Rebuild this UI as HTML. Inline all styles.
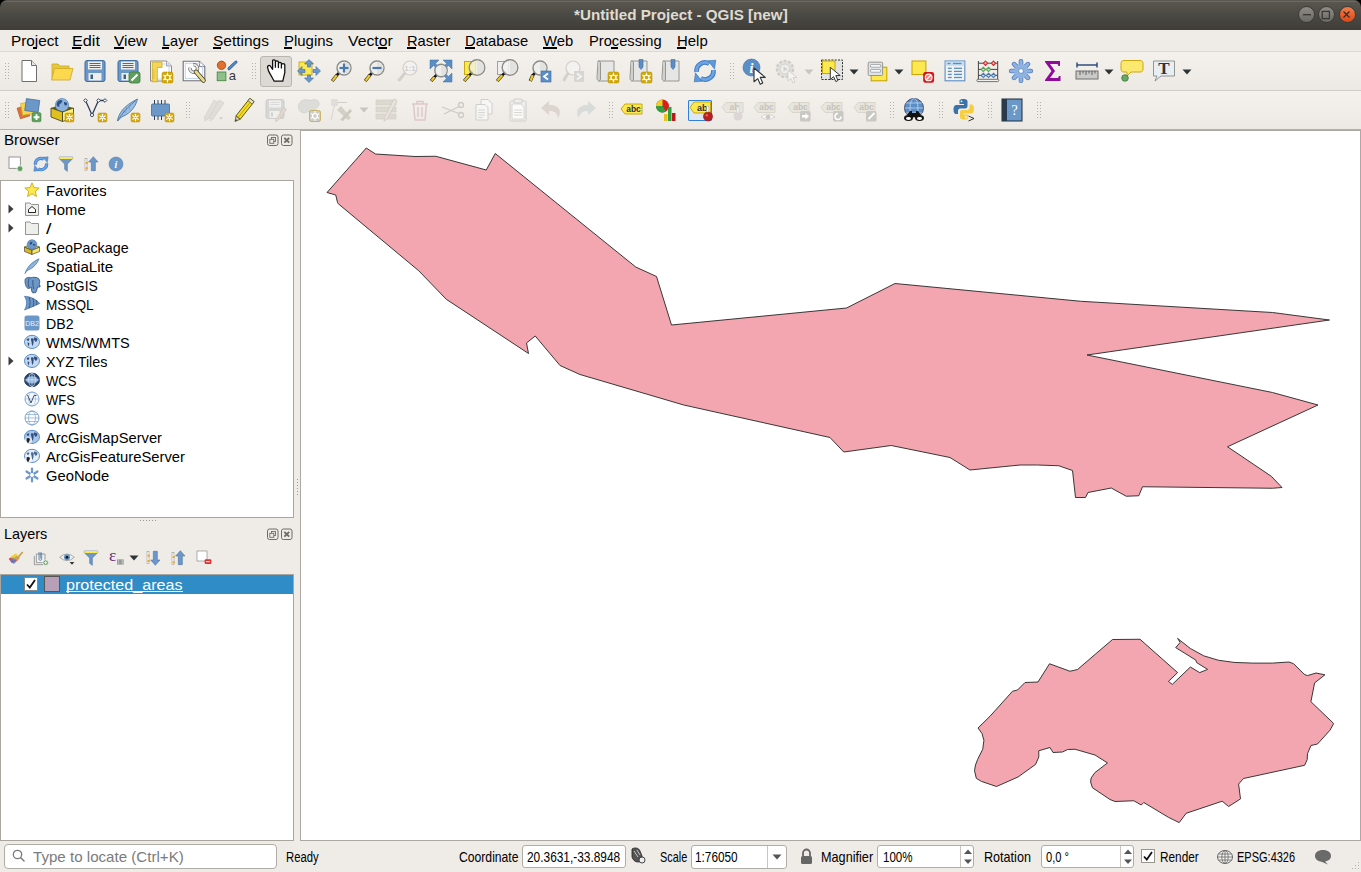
<!DOCTYPE html>
<html><head><meta charset="utf-8"><title>QGIS</title>
<style>
*{margin:0;padding:0;box-sizing:border-box}
html,body{width:1361px;height:872px;overflow:hidden;background:#efebe7;font-family:"Liberation Sans",sans-serif;position:relative}
.a{position:absolute}
.t{white-space:pre;line-height:normal;transform-origin:0 0}
svg{overflow:visible}
</style></head><body>
<div class="a" style="left:0;top:0;width:1361px;height:8px;background:#000"></div>
<div class="a" style="left:0;top:0;width:1361px;height:30px;border-radius:7px 7px 0 0;background:linear-gradient(#5b5951 0,#58564e 2px,#4b4943 50%,#3f3d38 100%)"></div>
<div class="a" style="left:4px;top:1px;width:1353px;height:1px;background:#6c6a60;border-radius:2px"></div>
<div class="a" style="left:1298.3px;top:6.2px;width:17px;height:17px;border-radius:50%;background:linear-gradient(#8e8c86,#6b6964);border:1px solid #3a3935"></div>
<div class="a" style="left:1318.4px;top:6.2px;width:17px;height:17px;border-radius:50%;background:linear-gradient(#8e8c86,#6b6964);border:1px solid #3a3935"></div>
<div class="a" style="left:1338.5px;top:6.2px;width:17px;height:17px;border-radius:50%;background:linear-gradient(#f27d4c,#dd4814);border:1px solid #3a3935"></div>
<svg class="a" style="left:1298px;top:6px" width="60" height="18"><rect x="5" y="8" width="8" height="1.4" fill="#3a3935"/><rect x="24.2" y="5.4" width="7.2" height="7.2" fill="none" stroke="#3a3935" stroke-width="1.3"/><path d="M45.5 5.5 L51.5 11.5 M51.5 5.5 L45.5 11.5" stroke="#3a2a20" stroke-width="1.3"/></svg>
<div class="a" style="left:0;top:30px;width:1361px;height:21px;background:#efece8"></div>
<div class="a" style="left:0;top:51px;width:1361px;height:1px;background:#dcd8d2"></div>
<div class="a" style="left:33px;top:47px;width:4px;height:2px;background:#000"></div>
<div class="a" style="left:72px;top:47px;width:8.700000000000003px;height:2px;background:#000"></div>
<div class="a" style="left:114.3px;top:47px;width:10.0px;height:2px;background:#000"></div>
<div class="a" style="left:162px;top:47px;width:7.300000000000011px;height:2px;background:#000"></div>
<div class="a" style="left:213px;top:47px;width:8px;height:2px;background:#000"></div>
<div class="a" style="left:284.4px;top:47px;width:7.900000000000034px;height:2px;background:#000"></div>
<div class="a" style="left:377.7px;top:47px;width:9.300000000000011px;height:2px;background:#000"></div>
<div class="a" style="left:407px;top:47px;width:9px;height:2px;background:#000"></div>
<div class="a" style="left:465px;top:47px;width:10px;height:2px;background:#000"></div>
<div class="a" style="left:543px;top:47px;width:13.5px;height:2px;background:#000"></div>
<div class="a" style="left:611px;top:47px;width:7px;height:2px;background:#000"></div>
<div class="a" style="left:676.6px;top:47px;width:9.799999999999955px;height:2px;background:#000"></div>
<div class="a" style="left:0;top:52px;width:1361px;height:38px;background:linear-gradient(#f4f1ec,#f0ece7 60%,#ece8e3)"></div>
<div class="a" style="left:0;top:90px;width:1361px;height:1px;background:#cfcbc5"></div>
<div class="a" style="left:0;top:91px;width:1361px;height:38px;background:linear-gradient(#f4f1ec,#f0ece7 60%,#ece8e3)"></div>
<div class="a" style="left:0;top:129px;width:1361px;height:1px;background:#b3afaa"></div>
<svg class="a" style="left:5px;top:63px" width="5" height="18"><rect x="0" y="0" width="1" height="1" fill="#b4b0a9"/><rect x="3" y="0" width="1" height="1" fill="#b4b0a9"/><rect x="0" y="3" width="1" height="1" fill="#b4b0a9"/><rect x="3" y="3" width="1" height="1" fill="#b4b0a9"/><rect x="0" y="6" width="1" height="1" fill="#b4b0a9"/><rect x="3" y="6" width="1" height="1" fill="#b4b0a9"/><rect x="0" y="9" width="1" height="1" fill="#b4b0a9"/><rect x="3" y="9" width="1" height="1" fill="#b4b0a9"/><rect x="0" y="12" width="1" height="1" fill="#b4b0a9"/><rect x="3" y="12" width="1" height="1" fill="#b4b0a9"/><rect x="0" y="15" width="1" height="1" fill="#b4b0a9"/><rect x="3" y="15" width="1" height="1" fill="#b4b0a9"/></svg>
<svg class="a" style="left:252px;top:63px" width="5" height="18"><rect x="0" y="0" width="1" height="1" fill="#b4b0a9"/><rect x="3" y="0" width="1" height="1" fill="#b4b0a9"/><rect x="0" y="3" width="1" height="1" fill="#b4b0a9"/><rect x="3" y="3" width="1" height="1" fill="#b4b0a9"/><rect x="0" y="6" width="1" height="1" fill="#b4b0a9"/><rect x="3" y="6" width="1" height="1" fill="#b4b0a9"/><rect x="0" y="9" width="1" height="1" fill="#b4b0a9"/><rect x="3" y="9" width="1" height="1" fill="#b4b0a9"/><rect x="0" y="12" width="1" height="1" fill="#b4b0a9"/><rect x="3" y="12" width="1" height="1" fill="#b4b0a9"/><rect x="0" y="15" width="1" height="1" fill="#b4b0a9"/><rect x="3" y="15" width="1" height="1" fill="#b4b0a9"/></svg>
<svg class="a" style="left:730px;top:63px" width="5" height="18"><rect x="0" y="0" width="1" height="1" fill="#b4b0a9"/><rect x="3" y="0" width="1" height="1" fill="#b4b0a9"/><rect x="0" y="3" width="1" height="1" fill="#b4b0a9"/><rect x="3" y="3" width="1" height="1" fill="#b4b0a9"/><rect x="0" y="6" width="1" height="1" fill="#b4b0a9"/><rect x="3" y="6" width="1" height="1" fill="#b4b0a9"/><rect x="0" y="9" width="1" height="1" fill="#b4b0a9"/><rect x="3" y="9" width="1" height="1" fill="#b4b0a9"/><rect x="0" y="12" width="1" height="1" fill="#b4b0a9"/><rect x="3" y="12" width="1" height="1" fill="#b4b0a9"/><rect x="0" y="15" width="1" height="1" fill="#b4b0a9"/><rect x="3" y="15" width="1" height="1" fill="#b4b0a9"/></svg>
<div class="a" style="left:260px;top:56px;width:32px;height:31px;border-radius:3px;background:#dcd9d5;border:1px solid #b9b5af"></div>
<svg class="a" style="left:17px;top:59px" width="24" height="24" viewBox="0 0 24 24"><path d="M5 1.5 H14.5 L19.5 6.5 V22.5 H5 Z" fill="#fff" stroke="#6e6e6e" stroke-width="1"/><path d="M14.5 1.5 V6.5 H19.5" fill="#e8e8e8" stroke="#6e6e6e" stroke-width="1"/></svg>
<svg class="a" style="left:50px;top:59px" width="24" height="24" viewBox="0 0 24 24"><path d="M2 5 H8 L10 7 H19 V19 H2 Z" fill="#e8c93c" stroke="#c9a825" stroke-width="0.8"/><path d="M4.5 9.5 H23 L20 21 H1.5 Z" fill="#fcd84e" stroke="#c9a825" stroke-width="0.8"/></svg>
<svg class="a" style="left:83px;top:59px" width="24" height="24" viewBox="0 0 24 24"><rect x="2" y="1.5" width="20" height="21" rx="2" fill="#6b97c9" stroke="#3f6d9e" stroke-width="1"/><rect x="5" y="2.5" width="14" height="8" fill="#eeeeec"/><g stroke="#555" stroke-width="0.9"><line x1="6.5" y1="4.5" x2="17.5" y2="4.5"/><line x1="6.5" y1="6.5" x2="17.5" y2="6.5"/><line x1="6.5" y1="8.5" x2="17.5" y2="8.5"/></g><rect x="5.5" y="14" width="13" height="7.5" fill="#eeeeec"/><rect x="7.5" y="15.5" width="2.5" height="4.5" fill="#3f5f85"/></svg>
<svg class="a" style="left:116px;top:59px" width="24" height="24" viewBox="0 0 24 24"><rect x="2" y="1.5" width="20" height="21" rx="2" fill="#6b97c9" stroke="#3f6d9e" stroke-width="1"/><rect x="5" y="2.5" width="14" height="8" fill="#eeeeec"/><g stroke="#555" stroke-width="0.9"><line x1="6.5" y1="4.5" x2="17.5" y2="4.5"/><line x1="6.5" y1="6.5" x2="17.5" y2="6.5"/><line x1="6.5" y1="8.5" x2="17.5" y2="8.5"/></g><rect x="5.5" y="14" width="13" height="7.5" fill="#eeeeec"/><rect x="7.5" y="15.5" width="2.5" height="4.5" fill="#3f5f85"/><rect x="13" y="13" width="11" height="11" rx="2" fill="#5fa05c" stroke="#3d7a3a" stroke-width="0.8"/><line x1="15.5" y1="21.5" x2="21.5" y2="15.5" stroke="#fff" stroke-width="2"/></svg>
<svg class="a" style="left:149px;top:59px" width="24" height="24" viewBox="0 0 24 24"><path d="M1.5 2 H17.5 L22.5 7 V22 H1.5 Z" fill="#fff" stroke="#8a8a8a" stroke-width="1"/><path d="M17.5 2 V7 H22.5" fill="#eee" stroke="#8a8a8a" stroke-width="0.8"/><rect x="5" y="5" width="15" height="15" fill="none" stroke="#b4c8f0" stroke-width="0.8"/><path d="M3.2 3.2 H13 V8.4 H8.3 V22.8 H3.2 Z" fill="#f6d655" stroke="#c9a825" stroke-width="0.8"/><g stroke="#c9a825" stroke-width="0.6"><line x1="3.5" y1="11" x2="5.5" y2="11"/><line x1="3.5" y1="13" x2="5.5" y2="13"/><line x1="3.5" y1="15" x2="5.5" y2="15"/><line x1="3.5" y1="17" x2="5.5" y2="17"/><line x1="3.5" y1="19" x2="5.5" y2="19"/></g><rect x="13" y="13" width="11" height="11" rx="1.8" fill="#d4a90b" stroke="#b08a00" stroke-width="0.5"/><g stroke="#fff" stroke-width="1.1" stroke-linecap="round"><line x1="20.41" y1="19.60" x2="22.31" y2="20.70"/><line x1="18.50" y1="20.70" x2="18.50" y2="22.90"/><line x1="16.59" y1="19.60" x2="14.69" y2="20.70"/><line x1="16.59" y1="17.40" x2="14.69" y2="16.30"/><line x1="18.50" y1="16.30" x2="18.50" y2="14.10"/><line x1="20.41" y1="17.40" x2="22.31" y2="16.30"/></g><circle cx="18.5" cy="18.5" r="2.50" fill="none" stroke="#fff" stroke-width="1.1"/></svg>
<svg class="a" style="left:182px;top:59px" width="24" height="24" viewBox="0 0 24 24"><path d="M1.2 2.2 H17.4 L22.8 7.6 V21.7 H1.2 Z" fill="#fff" stroke="#707070" stroke-width="1.1"/><path d="M17.4 2.2 V7.6 H22.8" fill="#fff" stroke="#707070" stroke-width="0.9"/><rect x="3.3" y="4.3" width="17.4" height="15.1" fill="none" stroke="#b8cff8" stroke-width="0.9"/><path d="M8 8.8 A3.8 3.8 0 1 0 11.2 5.7" fill="none" stroke="#6a6a6a" stroke-width="3.4"/><path d="M8 8.8 A3.8 3.8 0 1 0 11.2 5.7" fill="none" stroke="#e4e4e2" stroke-width="2"/><line x1="14" y1="12.8" x2="21.5" y2="21.5" stroke="#3a3a2a" stroke-width="4.4" stroke-linecap="round"/><line x1="14" y1="12.8" x2="21.5" y2="21.5" stroke="#e8d88a" stroke-width="3" stroke-linecap="round"/></svg>
<svg class="a" style="left:215px;top:59px" width="24" height="24" viewBox="0 0 24 24"><circle cx="6.5" cy="6.3" r="4.2" fill="#e07030" stroke="#a04010" stroke-width="0.8"/><line x1="14" y1="9.6" x2="21" y2="3" stroke="#2a5a90" stroke-width="3" stroke-linecap="round"/><line x1="14" y1="9.6" x2="21" y2="3" stroke="#5b8ec6" stroke-width="1.6" stroke-linecap="round"/><rect x="2.2" y="13" width="8.7" height="8.7" fill="#8fbf8a" stroke="#4a8a45" stroke-width="0.9"/><text x="13.8" y="20.8" font-family="Liberation Sans" font-size="13" fill="#3a3a3a">a</text></svg>
<svg class="a" style="left:264px;top:59px" width="24" height="24" viewBox="0 0 24 24"><path d="M3.5 8.2 C3.5 6.6 5.2 5.8 6.3 7 L8.6 10.3 V2 C8.6 0.4 11.4 0.4 11.4 2 V8.2 V3 C11.4 1.5 14.4 1.5 14.4 3 V8.5 V4.4 C14.4 3 17.4 3 17.4 4.4 V9 V5.7 C17.4 4.3 20.8 4.3 20.8 5.7 V13.6 L18.8 22.2 H10.2 L4.7 12.4 Z" fill="#fff" stroke="#111" stroke-width="1.3" stroke-linejoin="round"/></svg>
<svg class="a" style="left:297px;top:59px" width="24" height="24" viewBox="0 0 24 24"><rect x="2" y="3" width="13" height="13" fill="#fce94f" stroke="#c4a000" stroke-width="0.8"/><g fill="#6b97c9" stroke="#3f6d9e" stroke-width="0.6"><path d="M12 0.5 L16.5 5 H13.5 V8 H10.5 V5 H7.5 Z"/><path d="M12 23.5 L16.5 19 H13.5 V16 H10.5 V19 H7.5 Z"/><path d="M0.5 12 L5 7.5 V10.5 H8 V13.5 H5 V16.5 Z"/><path d="M23.5 12 L19 7.5 V10.5 H16 V13.5 H19 V16.5 Z"/></g></svg>
<svg class="a" style="left:330px;top:59px" width="24" height="24" viewBox="0 0 24 24"><line x1="9.46" y1="13.54" x2="6.760000000000001" y2="16.24" stroke="#111" stroke-width="2.6" stroke-linecap="round"/><line x1="6.960000000000001" y1="16.04" x2="2.2" y2="22" stroke="#3a3a2a" stroke-width="3.4"/><line x1="6.760000000000001" y1="16.24" x2="2.6" y2="21.6" stroke="#f0c92a" stroke-width="2.2"/><circle cx="14" cy="9" r="7" fill="#efefed" stroke="#8a8a88" stroke-width="1.4"/><path d="M14 2.7 A6.3 6.3 0 0 1 14 15.3 Z" fill="#e2e2e0"/><g stroke="#4a78b0" stroke-width="2.2"><line x1="14" y1="4.5" x2="14" y2="13.5"/><line x1="9.5" y1="9" x2="18.5" y2="9"/></g></svg>
<svg class="a" style="left:363px;top:59px" width="24" height="24" viewBox="0 0 24 24"><line x1="9.46" y1="13.54" x2="6.760000000000001" y2="16.24" stroke="#111" stroke-width="2.6" stroke-linecap="round"/><line x1="6.960000000000001" y1="16.04" x2="2.2" y2="22" stroke="#3a3a2a" stroke-width="3.4"/><line x1="6.760000000000001" y1="16.24" x2="2.6" y2="21.6" stroke="#f0c92a" stroke-width="2.2"/><circle cx="14" cy="9" r="7" fill="#efefed" stroke="#8a8a88" stroke-width="1.4"/><path d="M14 2.7 A6.3 6.3 0 0 1 14 15.3 Z" fill="#e2e2e0"/><line x1="9.5" y1="9" x2="18.5" y2="9" stroke="#4a78b0" stroke-width="2.2"/></svg>
<svg class="a" style="left:396px;top:59px" width="24" height="24" viewBox="0 0 24 24"><line x1="9.100000000000001" y1="13.899999999999999" x2="2.5" y2="22" stroke="#d3d1cc" stroke-width="3"/><circle cx="14" cy="9" r="7" fill="#f3f2f0" stroke="#d0cec9" stroke-width="1.2"/><text x="14" y="12" text-anchor="middle" font-family="Liberation Sans" font-weight="bold" font-size="8" fill="#d0cec9">1:1</text></svg>
<svg class="a" style="left:429px;top:59px" width="24" height="24" viewBox="0 0 24 24"><g fill="#5b8ec6" stroke="#3f6d9e" stroke-width="0.5"><path d="M1 1 H10 L1 10 Z"/><path d="M23 1 H14 L23 10 Z"/><path d="M23 23 H14 L23 14 Z"/></g><g stroke="#5b8ec6" stroke-width="3.2"><line x1="4" y1="4" x2="9" y2="9"/><line x1="20" y1="4" x2="15" y2="9"/><line x1="20" y1="20" x2="15" y2="15"/></g><line x1="8.036000000000001" y1="15.463999999999999" x2="5.336" y2="18.163999999999998" stroke="#111" stroke-width="2.6" stroke-linecap="round"/><line x1="5.5360000000000005" y1="17.964" x2="2.2" y2="22" stroke="#3a3a2a" stroke-width="3.4"/><line x1="5.336" y1="18.163999999999998" x2="2.6" y2="21.6" stroke="#f0c92a" stroke-width="2.2"/><circle cx="12" cy="11.5" r="6.2" fill="#efefed" stroke="#8a8a88" stroke-width="1.4"/><path d="M12 6.0 A5.5 5.5 0 0 1 12 17.0 Z" fill="#e2e2e0"/></svg>
<svg class="a" style="left:462px;top:59px" width="24" height="24" viewBox="0 0 24 24"><rect x="2.5" y="2.5" width="11" height="13" fill="#fce94f" stroke="#c4a000" stroke-width="0.9"/><line x1="9.884" y1="13.616" x2="7.184" y2="16.316" stroke="#111" stroke-width="2.6" stroke-linecap="round"/><line x1="7.384" y1="16.116" x2="2.2" y2="22" stroke="#3a3a2a" stroke-width="3.4"/><line x1="7.184" y1="16.316" x2="2.6" y2="21.6" stroke="#f0c92a" stroke-width="2.2"/><circle cx="15" cy="8.5" r="7.8" fill="rgba(240,240,225,0.8)" stroke="#8a8a88" stroke-width="1.4"/><path d="M15 1.4000000000000001 A7.1 7.1 0 0 1 15 15.600000000000001 Z" fill="#e2e2e0"/></svg>
<svg class="a" style="left:495px;top:59px" width="24" height="24" viewBox="0 0 24 24"><rect x="2.5" y="2.5" width="11" height="13" fill="#efefed" stroke="#999" stroke-width="0.9"/><line x1="9.884" y1="13.616" x2="7.184" y2="16.316" stroke="#111" stroke-width="2.6" stroke-linecap="round"/><line x1="7.384" y1="16.116" x2="2.2" y2="22" stroke="#3a3a2a" stroke-width="3.4"/><line x1="7.184" y1="16.316" x2="2.6" y2="21.6" stroke="#f0c92a" stroke-width="2.2"/><circle cx="15" cy="8.5" r="7.8" fill="rgba(242,242,240,0.85)" stroke="#8a8a88" stroke-width="1.4"/><path d="M15 1.4000000000000001 A7.1 7.1 0 0 1 15 15.600000000000001 Z" fill="#e2e2e0"/></svg>
<svg class="a" style="left:528px;top:59px" width="24" height="24" viewBox="0 0 24 24"><line x1="7.46" y1="13.54" x2="4.76" y2="16.24" stroke="#111" stroke-width="2.6" stroke-linecap="round"/><line x1="4.96" y1="16.04" x2="2.2" y2="22" stroke="#3a3a2a" stroke-width="3.4"/><line x1="4.76" y1="16.24" x2="2.6" y2="21.6" stroke="#f0c92a" stroke-width="2.2"/><circle cx="12" cy="9" r="7" fill="#efefed" stroke="#8a8a88" stroke-width="1.4"/><path d="M12 2.7 A6.3 6.3 0 0 1 12 15.3 Z" fill="#e2e2e0"/><rect x="13" y="12" width="10" height="11" fill="#5b8ec6" stroke="#3f6d9e" stroke-width="0.6"/><path d="M20 14.5 L16 17.5 L20 20.5" fill="none" stroke="#fff" stroke-width="1.8"/></svg>
<svg class="a" style="left:561px;top:59px" width="24" height="24" viewBox="0 0 24 24"><line x1="7.1000000000000005" y1="13.899999999999999" x2="2.5" y2="22" stroke="#d3d1cc" stroke-width="3"/><circle cx="12" cy="9" r="7" fill="#f3f2f0" stroke="#d0cec9" stroke-width="1.2"/><rect x="13" y="12" width="10" height="11" fill="#d8d6d2"/><path d="M16 14.5 L20 17.5 L16 20.5" fill="none" stroke="#f4f4f4" stroke-width="1.8"/></svg>
<svg class="a" style="left:595px;top:59px" width="24" height="24" viewBox="0 0 24 24"><path d="M3 2 H19 V22 H5 C3 22 2 21 2 19 Z" fill="#e6e6e4" stroke="#8c8c8a" stroke-width="0.9"/><path d="M3 2 C5 2 5.5 3 5.5 4 V20 C5.5 21.5 4 22 3 22" fill="#d0d0ce" stroke="#8c8c8a" stroke-width="0.9"/><rect x="13" y="13" width="11" height="11" rx="1.8" fill="#d4a90b" stroke="#b08a00" stroke-width="0.5"/><g stroke="#fff" stroke-width="1.1" stroke-linecap="round"><line x1="20.41" y1="19.60" x2="22.31" y2="20.70"/><line x1="18.50" y1="20.70" x2="18.50" y2="22.90"/><line x1="16.59" y1="19.60" x2="14.69" y2="20.70"/><line x1="16.59" y1="17.40" x2="14.69" y2="16.30"/><line x1="18.50" y1="16.30" x2="18.50" y2="14.10"/><line x1="20.41" y1="17.40" x2="22.31" y2="16.30"/></g><circle cx="18.5" cy="18.5" r="2.50" fill="none" stroke="#fff" stroke-width="1.1"/></svg>
<svg class="a" style="left:628px;top:59px" width="24" height="24" viewBox="0 0 24 24"><path d="M3 2 H19 V22 H5 C3 22 2 21 2 19 Z" fill="#e6e6e4" stroke="#8c8c8a" stroke-width="0.9"/><path d="M3 2 C5 2 5.5 3 5.5 4 V20 C5.5 21.5 4 22 3 22" fill="#d0d0ce" stroke="#8c8c8a" stroke-width="0.9"/><path d="M11 0.5 H15 V8 L13 10.5 L11 8 Z" fill="#5b8ec6" stroke="#3f6d9e" stroke-width="0.6"/><rect x="13" y="13" width="11" height="11" rx="1.8" fill="#d4a90b" stroke="#b08a00" stroke-width="0.5"/><g stroke="#fff" stroke-width="1.1" stroke-linecap="round"><line x1="20.41" y1="19.60" x2="22.31" y2="20.70"/><line x1="18.50" y1="20.70" x2="18.50" y2="22.90"/><line x1="16.59" y1="19.60" x2="14.69" y2="20.70"/><line x1="16.59" y1="17.40" x2="14.69" y2="16.30"/><line x1="18.50" y1="16.30" x2="18.50" y2="14.10"/><line x1="20.41" y1="17.40" x2="22.31" y2="16.30"/></g><circle cx="18.5" cy="18.5" r="2.50" fill="none" stroke="#fff" stroke-width="1.1"/></svg>
<svg class="a" style="left:660px;top:59px" width="24" height="24" viewBox="0 0 24 24"><path d="M3 2 H19 V22 H5 C3 22 2 21 2 19 Z" fill="#e6e6e4" stroke="#8c8c8a" stroke-width="0.9"/><path d="M3 2 C5 2 5.5 3 5.5 4 V20 C5.5 21.5 4 22 3 22" fill="#d0d0ce" stroke="#8c8c8a" stroke-width="0.9"/><path d="M11 0.5 H15 V8 L13 10.5 L11 8 Z" fill="#5b8ec6" stroke="#3f6d9e" stroke-width="0.6"/></svg>
<svg class="a" style="left:693px;top:59px" width="24" height="24" viewBox="0 0 24 24"><g fill="none" stroke="#3f78c0" stroke-width="4.8"><path d="M3.6 13 A8.4 8.4 0 0 1 16.2 4.7"/><path d="M20.4 11 A8.4 8.4 0 0 1 7.8 19.3"/></g><g fill="none" stroke="#6aa4e6" stroke-width="2.8"><path d="M3.6 13 A8.4 8.4 0 0 1 16.2 4.7"/><path d="M20.4 11 A8.4 8.4 0 0 1 7.8 19.3"/></g><path d="M15 1.8 L22.8 1.2 L21.5 10 Z" fill="#5b9ae0" stroke="#3f6d9e" stroke-width="0.6"/><path d="M9 22.2 L1.2 22.8 L2.5 14 Z" fill="#5b9ae0" stroke="#3f6d9e" stroke-width="0.6"/></svg>
<svg class="a" style="left:742px;top:59px" width="24" height="24" viewBox="0 0 24 24"><circle cx="9.5" cy="8.5" r="8.5" fill="#5b8ec6" stroke="#3f6d9e" stroke-width="0.6"/><text x="9.5" y="14" text-anchor="middle" font-family="Liberation Serif" font-style="italic" font-weight="bold" font-size="14" fill="#fff">i</text><path transform="translate(12,9) scale(1.25)" d="M0 0 L0 11 L3 8.5 L5 13 L7 12 L5 7.5 L9 7.5 Z" fill="#fff" stroke="#2e3436" stroke-width="0.9" stroke-linejoin="round"/></svg>
<svg class="a" style="left:775px;top:59px" width="24" height="24" viewBox="0 0 24 24"><circle cx="10" cy="10" r="8" fill="#e4e3e0" stroke="#cfcdc8" stroke-width="2.5" stroke-dasharray="3 1.5"/><circle cx="10" cy="10" r="5" fill="#eeeeec" stroke="#d0cec9"/><path d="M8.5 7.5 L12.5 10 L8.5 12.5 Z" fill="#d0cec9"/><path transform="translate(13,11) scale(1)" d="M0 0 L0 11 L3 8.5 L5 13 L7 12 L5 7.5 L9 7.5 Z" fill="#f4f4f2" stroke="#d0cec9" stroke-width="0.9" stroke-linejoin="round"/></svg>
<svg class="a" style="left:820px;top:59px" width="24" height="24" viewBox="0 0 24 24"><rect x="1.5" y="1" width="21" height="19.5" fill="#e2e2e0" stroke="#2e3436" stroke-width="1" stroke-dasharray="2 1.3"/><rect x="2.5" y="2" width="12.5" height="12.5" fill="#fce94f" stroke="#c4a000" stroke-width="0.9"/><path transform="translate(10.3,8.3) scale(1.1)" d="M0 0 L0 11 L3 8.5 L5 13 L7 12 L5 7.5 L9 7.5 Z" fill="#fff" stroke="#2e3436" stroke-width="0.9" stroke-linejoin="round"/></svg>
<svg class="a" style="left:866px;top:59px" width="24" height="24" viewBox="0 0 24 24"><rect x="5.2" y="8.2" width="15.6" height="13.6" fill="#fce94f" stroke="#c4a000" stroke-width="1"/><rect x="2.2" y="3.2" width="14.4" height="13.3" rx="1" fill="#dde4ea" stroke="#959595" stroke-width="1"/><rect x="4.6" y="5.6" width="10" height="2.6" rx="0.5" fill="#fff" stroke="#959595" stroke-width="0.8"/><rect x="4.6" y="10.6" width="10" height="2.6" rx="0.5" fill="#fff" stroke="#959595" stroke-width="0.8"/></svg>
<svg class="a" style="left:910px;top:59px" width="24" height="24" viewBox="0 0 24 24"><rect x="2" y="2" width="13.9" height="13.6" fill="#fce94f" stroke="#c4a000" stroke-width="1"/><rect x="13.2" y="13" width="10.9" height="10.8" rx="2.2" fill="#d41515"/><circle cx="18.65" cy="18.4" r="3.4" fill="#f08080" stroke="#fff" stroke-width="1.1"/><line x1="16.3" y1="20.8" x2="21" y2="16" stroke="#fff" stroke-width="1.2"/></svg>
<svg class="a" style="left:943px;top:59px" width="24" height="24" viewBox="0 0 24 24"><rect x="2.1" y="2" width="19.7" height="19.8" fill="#f2f2f0" stroke="#5b8ec6" stroke-width="1.1"/><rect x="2.6" y="2.5" width="18.7" height="4.3" fill="#c4dcf0"/><g stroke="#5b8ec6" stroke-width="1.3"><line x1="4.5" y1="4.5" x2="7.5" y2="4.5"/><line x1="10" y1="4.5" x2="18.5" y2="4.5"/><line x1="4.9" y1="9.3" x2="8.7" y2="9.3"/><line x1="11" y1="9.3" x2="19" y2="9.3"/><line x1="4.9" y1="12.4" x2="8.7" y2="12.4"/><line x1="11" y1="12.4" x2="19" y2="12.4"/><line x1="4.9" y1="15.4" x2="8.7" y2="15.4"/><line x1="11" y1="15.4" x2="19" y2="15.4"/><line x1="4.9" y1="18.5" x2="8.7" y2="18.5"/><line x1="11" y1="18.5" x2="19" y2="18.5"/></g></svg>
<svg class="a" style="left:976px;top:59px" width="24" height="24" viewBox="0 0 24 24"><g stroke="#444" stroke-width="1"><line x1="2.4" y1="2" x2="2.4" y2="20.5"/><line x1="21.7" y1="2" x2="21.7" y2="20.5"/><line x1="2.4" y1="4.2" x2="21.7" y2="4.2"/><line x1="2.4" y1="10.4" x2="21.7" y2="10.4"/><line x1="2.4" y1="16.4" x2="21.7" y2="16.4"/></g><rect x="0.9" y="20.3" width="21.8" height="2.3" rx="1" fill="#f0f0ee" stroke="#666" stroke-width="0.9"/><path d="M9.5 2.05 L11.65 4.2 L9.5 6.35 L7.35 4.2 Z" fill="#f4b8b8" stroke="#c83030" stroke-width="1.1"/><path d="M17.5 2.05 L19.65 4.2 L17.5 6.35 L15.35 4.2 Z" fill="#f4b8b8" stroke="#c83030" stroke-width="1.1"/><path d="M7.3 8.25 L9.45 10.4 L7.3 12.55 L5.15 10.4 Z" fill="#c8ecc0" stroke="#5aa055" stroke-width="1.1"/><path d="M12.5 8.25 L14.65 10.4 L12.5 12.55 L10.35 10.4 Z" fill="#c8ecc0" stroke="#5aa055" stroke-width="1.1"/><path d="M7.3 14.25 L9.45 16.4 L7.3 18.55 L5.15 16.4 Z" fill="#c8e0f8" stroke="#4a78b0" stroke-width="1.1"/><path d="M12.5 14.25 L14.65 16.4 L12.5 18.55 L10.35 16.4 Z" fill="#c8e0f8" stroke="#4a78b0" stroke-width="1.1"/><path d="M17.5 14.25 L19.65 16.4 L17.5 18.55 L15.35 16.4 Z" fill="#c8e0f8" stroke="#4a78b0" stroke-width="1.1"/></svg>
<svg class="a" style="left:1009px;top:59px" width="24" height="24" viewBox="0 0 24 24"><g stroke="#4a7ac0" stroke-width="4.6" stroke-linecap="round"><line x1="12" y1="2.2" x2="12" y2="21.8"/><line x1="2.2" y1="12" x2="21.8" y2="12"/><line x1="5.1" y1="5.1" x2="18.9" y2="18.9"/><line x1="18.9" y1="5.1" x2="5.1" y2="18.9"/></g><g stroke="#8fb3e0" stroke-width="3" stroke-linecap="round"><line x1="12" y1="2.2" x2="12" y2="21.8"/><line x1="2.2" y1="12" x2="21.8" y2="12"/><line x1="5.1" y1="5.1" x2="18.9" y2="18.9"/><line x1="18.9" y1="5.1" x2="5.1" y2="18.9"/></g><circle cx="12" cy="12" r="6.8" fill="#8fb3e0"/><circle cx="12" cy="12" r="2.4" fill="#fff" stroke="#4a7ac0" stroke-width="0.7"/></svg>
<svg class="a" style="left:1042px;top:59px" width="24" height="24" viewBox="0 0 24 24"><path d="M3 2 H18 V7 H16.5 L15.5 5 H8 L13 12 L8 19 H16 L17 17 H18.5 V22 H3 V21 L9.5 12 L3 3 Z" fill="#8f0b9a"/></svg>
<svg class="a" style="left:1075px;top:59px" width="24" height="24" viewBox="0 0 24 24"><g stroke="#2f4f7f" stroke-width="1.5"><line x1="2" y1="6" x2="22" y2="6"/><line x1="2" y1="3.5" x2="2" y2="8.5"/><line x1="22" y1="3.5" x2="22" y2="8.5"/></g><rect x="1" y="12" width="22" height="8" fill="#cacac8" stroke="#707070" stroke-width="1"/><g stroke="#555" stroke-width="0.9"><line x1="5" y1="12" x2="5" y2="16"/><line x1="8" y1="12" x2="8" y2="14.5"/><line x1="11" y1="12" x2="11" y2="16"/><line x1="14" y1="12" x2="14" y2="14.5"/><line x1="17" y1="12" x2="17" y2="16"/><line x1="20" y1="12" x2="20" y2="14.5"/></g></svg>
<svg class="a" style="left:1120px;top:59px" width="24" height="24" viewBox="0 0 24 24"><path d="M4 1.5 H20 C22 1.5 23 2.5 23 4.5 V10 C23 12 22 13 20 13 H11 L7 17 V13 H4 C2 13 1 12 1 10 V4.5 C1 2.5 2 1.5 4 1.5 Z" fill="#fbe96f" stroke="#c4a000" stroke-width="0.9"/><circle cx="5" cy="19" r="3.3" fill="#6aa765" stroke="#3d7a3a" stroke-width="0.8"/></svg>
<svg class="a" style="left:1152px;top:59px" width="24" height="24" viewBox="0 0 24 24"><path d="M1.5 2 H22.5 V17 H9 L3 22 L5 17 H1.5 Z" fill="#e7eef4" stroke="#8a8a8a" stroke-width="0.9"/><text x="12" y="15" text-anchor="middle" font-family="Liberation Serif" font-weight="bold" font-size="17" fill="#333">T</text></svg>
<svg class="a" style="left:804px;top:69px" width="10" height="6"><path d="M0.5 0.5 H9.5 L5 5.5 Z" fill="#c8c6c0"/></svg>
<svg class="a" style="left:849px;top:69px" width="10" height="6"><path d="M0.5 0.5 H9.5 L5 5.5 Z" fill="#2e3436"/></svg>
<svg class="a" style="left:894px;top:69px" width="10" height="6"><path d="M0.5 0.5 H9.5 L5 5.5 Z" fill="#2e3436"/></svg>
<svg class="a" style="left:1104px;top:69px" width="10" height="6"><path d="M0.5 0.5 H9.5 L5 5.5 Z" fill="#2e3436"/></svg>
<svg class="a" style="left:1182px;top:69px" width="10" height="6"><path d="M0.5 0.5 H9.5 L5 5.5 Z" fill="#2e3436"/></svg>
<svg class="a" style="left:5px;top:102px" width="5" height="18"><rect x="0" y="0" width="1" height="1" fill="#b4b0a9"/><rect x="3" y="0" width="1" height="1" fill="#b4b0a9"/><rect x="0" y="3" width="1" height="1" fill="#b4b0a9"/><rect x="3" y="3" width="1" height="1" fill="#b4b0a9"/><rect x="0" y="6" width="1" height="1" fill="#b4b0a9"/><rect x="3" y="6" width="1" height="1" fill="#b4b0a9"/><rect x="0" y="9" width="1" height="1" fill="#b4b0a9"/><rect x="3" y="9" width="1" height="1" fill="#b4b0a9"/><rect x="0" y="12" width="1" height="1" fill="#b4b0a9"/><rect x="3" y="12" width="1" height="1" fill="#b4b0a9"/><rect x="0" y="15" width="1" height="1" fill="#b4b0a9"/><rect x="3" y="15" width="1" height="1" fill="#b4b0a9"/></svg>
<svg class="a" style="left:186px;top:102px" width="5" height="18"><rect x="0" y="0" width="1" height="1" fill="#b4b0a9"/><rect x="3" y="0" width="1" height="1" fill="#b4b0a9"/><rect x="0" y="3" width="1" height="1" fill="#b4b0a9"/><rect x="3" y="3" width="1" height="1" fill="#b4b0a9"/><rect x="0" y="6" width="1" height="1" fill="#b4b0a9"/><rect x="3" y="6" width="1" height="1" fill="#b4b0a9"/><rect x="0" y="9" width="1" height="1" fill="#b4b0a9"/><rect x="3" y="9" width="1" height="1" fill="#b4b0a9"/><rect x="0" y="12" width="1" height="1" fill="#b4b0a9"/><rect x="3" y="12" width="1" height="1" fill="#b4b0a9"/><rect x="0" y="15" width="1" height="1" fill="#b4b0a9"/><rect x="3" y="15" width="1" height="1" fill="#b4b0a9"/></svg>
<svg class="a" style="left:609px;top:102px" width="5" height="18"><rect x="0" y="0" width="1" height="1" fill="#b4b0a9"/><rect x="3" y="0" width="1" height="1" fill="#b4b0a9"/><rect x="0" y="3" width="1" height="1" fill="#b4b0a9"/><rect x="3" y="3" width="1" height="1" fill="#b4b0a9"/><rect x="0" y="6" width="1" height="1" fill="#b4b0a9"/><rect x="3" y="6" width="1" height="1" fill="#b4b0a9"/><rect x="0" y="9" width="1" height="1" fill="#b4b0a9"/><rect x="3" y="9" width="1" height="1" fill="#b4b0a9"/><rect x="0" y="12" width="1" height="1" fill="#b4b0a9"/><rect x="3" y="12" width="1" height="1" fill="#b4b0a9"/><rect x="0" y="15" width="1" height="1" fill="#b4b0a9"/><rect x="3" y="15" width="1" height="1" fill="#b4b0a9"/></svg>
<svg class="a" style="left:890px;top:102px" width="5" height="18"><rect x="0" y="0" width="1" height="1" fill="#b4b0a9"/><rect x="3" y="0" width="1" height="1" fill="#b4b0a9"/><rect x="0" y="3" width="1" height="1" fill="#b4b0a9"/><rect x="3" y="3" width="1" height="1" fill="#b4b0a9"/><rect x="0" y="6" width="1" height="1" fill="#b4b0a9"/><rect x="3" y="6" width="1" height="1" fill="#b4b0a9"/><rect x="0" y="9" width="1" height="1" fill="#b4b0a9"/><rect x="3" y="9" width="1" height="1" fill="#b4b0a9"/><rect x="0" y="12" width="1" height="1" fill="#b4b0a9"/><rect x="3" y="12" width="1" height="1" fill="#b4b0a9"/><rect x="0" y="15" width="1" height="1" fill="#b4b0a9"/><rect x="3" y="15" width="1" height="1" fill="#b4b0a9"/></svg>
<svg class="a" style="left:939px;top:102px" width="5" height="18"><rect x="0" y="0" width="1" height="1" fill="#b4b0a9"/><rect x="3" y="0" width="1" height="1" fill="#b4b0a9"/><rect x="0" y="3" width="1" height="1" fill="#b4b0a9"/><rect x="3" y="3" width="1" height="1" fill="#b4b0a9"/><rect x="0" y="6" width="1" height="1" fill="#b4b0a9"/><rect x="3" y="6" width="1" height="1" fill="#b4b0a9"/><rect x="0" y="9" width="1" height="1" fill="#b4b0a9"/><rect x="3" y="9" width="1" height="1" fill="#b4b0a9"/><rect x="0" y="12" width="1" height="1" fill="#b4b0a9"/><rect x="3" y="12" width="1" height="1" fill="#b4b0a9"/><rect x="0" y="15" width="1" height="1" fill="#b4b0a9"/><rect x="3" y="15" width="1" height="1" fill="#b4b0a9"/></svg>
<svg class="a" style="left:988px;top:102px" width="5" height="18"><rect x="0" y="0" width="1" height="1" fill="#b4b0a9"/><rect x="3" y="0" width="1" height="1" fill="#b4b0a9"/><rect x="0" y="3" width="1" height="1" fill="#b4b0a9"/><rect x="3" y="3" width="1" height="1" fill="#b4b0a9"/><rect x="0" y="6" width="1" height="1" fill="#b4b0a9"/><rect x="3" y="6" width="1" height="1" fill="#b4b0a9"/><rect x="0" y="9" width="1" height="1" fill="#b4b0a9"/><rect x="3" y="9" width="1" height="1" fill="#b4b0a9"/><rect x="0" y="12" width="1" height="1" fill="#b4b0a9"/><rect x="3" y="12" width="1" height="1" fill="#b4b0a9"/><rect x="0" y="15" width="1" height="1" fill="#b4b0a9"/><rect x="3" y="15" width="1" height="1" fill="#b4b0a9"/></svg>
<svg class="a" style="left:1037px;top:102px" width="5" height="18"><rect x="0" y="0" width="1" height="1" fill="#b4b0a9"/><rect x="3" y="0" width="1" height="1" fill="#b4b0a9"/><rect x="0" y="3" width="1" height="1" fill="#b4b0a9"/><rect x="3" y="3" width="1" height="1" fill="#b4b0a9"/><rect x="0" y="6" width="1" height="1" fill="#b4b0a9"/><rect x="3" y="6" width="1" height="1" fill="#b4b0a9"/><rect x="0" y="9" width="1" height="1" fill="#b4b0a9"/><rect x="3" y="9" width="1" height="1" fill="#b4b0a9"/><rect x="0" y="12" width="1" height="1" fill="#b4b0a9"/><rect x="3" y="12" width="1" height="1" fill="#b4b0a9"/><rect x="0" y="15" width="1" height="1" fill="#b4b0a9"/><rect x="3" y="15" width="1" height="1" fill="#b4b0a9"/></svg>
<div class="a" style="left:688px;top:100px;width:24px;height:21px;background:#dfe7f2;border:1.5px solid #2f7fe0;border-radius:1px"></div>
<svg class="a" style="left:17px;top:98px" width="24" height="24" viewBox="0 0 24 24"><rect x="1.5" y="8.5" width="10" height="11" fill="#e0713a" stroke="#b05020" stroke-width="0.6" transform="rotate(-18 6.5 14)"/><rect x="4.5" y="4.5" width="11" height="12" fill="#f7d54a" stroke="#c9a825" stroke-width="0.6" transform="rotate(-10 10 10.5)"/><rect x="8.5" y="1.5" width="13.5" height="12" fill="#6b97c9" stroke="#3f6d9e" stroke-width="0.7" transform="rotate(8 15.25 7.5)"/><rect x="15" y="14.6" width="9" height="9.2" rx="1.5" fill="#5fa05c" stroke="#3d7a3a" stroke-width="0.5"/><path d="M19.5 16.3 V22.1 M16.6 19.2 H22.4" stroke="#fff" stroke-width="1.9"/></svg>
<svg class="a" style="left:50px;top:98px" width="24" height="24" viewBox="0 0 24 24"><path d="M1 10 L11 6.5 L23.5 10 L12.5 14 Z" fill="#6a5a10"/><circle cx="12" cy="7" r="6.6" fill="#8db3dd" stroke="#4a78b0" stroke-width="0.6"/><path d="M8 3 Q10.5 1.5 12.5 2.5 Q12 5 10 6 Q8.5 7 9.5 9 Q7 9 6.5 7 Q6.5 4.5 8 3 Z M14 4 Q16.5 3.5 17.5 6 Q16.5 8 15 7.5 Q13.5 6 14 4 Z" fill="#2e5485"/><path d="M1 10 L12.5 14 V23.5 L1 19 Z" fill="#e0c020" stroke="#3a3a10" stroke-width="0.8" stroke-linejoin="round"/><path d="M12.5 14 L23.5 10 V19.5 L12.5 23.5 Z" fill="#fcf07a" stroke="#3a3a10" stroke-width="0.8" stroke-linejoin="round"/><rect x="15" y="15" width="9" height="9" rx="1.6" fill="#d4a90b" stroke="#b8900a" stroke-width="0.5"/><g stroke="#fff" stroke-width="1.1" stroke-linecap="round"><line x1="19.50" y1="20.50" x2="19.50" y2="22.80"/><line x1="18.63" y1="20.00" x2="16.64" y2="21.15"/><line x1="18.63" y1="19.00" x2="16.64" y2="17.85"/><line x1="19.50" y1="18.50" x2="19.50" y2="16.20"/><line x1="20.37" y1="19.00" x2="22.36" y2="17.85"/><line x1="20.37" y1="20.00" x2="22.36" y2="21.15"/></g></svg>
<svg class="a" style="left:83px;top:98px" width="24" height="24" viewBox="0 0 24 24"><path d="M2.5 2.5 L9 17 L15.5 2.5 L22 2.5" fill="none" stroke="#2e3f5e" stroke-width="1.3"/><g fill="#fff" stroke="#2e3f5e" stroke-width="0.9"><rect x="1.2" y="1.2" width="2.6" height="2.6" transform="rotate(45 2.5 2.5)"/><circle cx="9" cy="17" r="1.6"/><rect x="14.2" y="1.2" width="2.6" height="2.6" transform="rotate(45 15.5 2.5)"/><rect x="20.7" y="1.2" width="2.6" height="2.6" transform="rotate(45 22 2.5)"/></g><rect x="15" y="15" width="9" height="9" rx="1.6" fill="#d4a90b" stroke="#b8900a" stroke-width="0.5"/><g stroke="#fff" stroke-width="1.1" stroke-linecap="round"><line x1="19.50" y1="20.50" x2="19.50" y2="22.80"/><line x1="18.63" y1="20.00" x2="16.64" y2="21.15"/><line x1="18.63" y1="19.00" x2="16.64" y2="17.85"/><line x1="19.50" y1="18.50" x2="19.50" y2="16.20"/><line x1="20.37" y1="19.00" x2="22.36" y2="17.85"/><line x1="20.37" y1="20.00" x2="22.36" y2="21.15"/></g></svg>
<svg class="a" style="left:116px;top:98px" width="24" height="24" viewBox="0 0 24 24"><path d="M1.5 23 C2.5 16 7 8 21.5 1 C20 7 16 15 5.5 19 Z" fill="#9dbde3" stroke="#3f6d9e" stroke-width="0.8"/><path d="M1.5 23 C6 16 11 9 20 2.5" fill="none" stroke="#3f6d9e" stroke-width="0.8"/><g stroke="#5f88bd" stroke-width="0.5"><line x1="8" y1="12" x2="6" y2="17"/><line x1="11" y1="9" x2="9" y2="15"/><line x1="14" y1="6.5" x2="13" y2="12"/></g><rect x="15" y="15" width="9" height="9" rx="1.6" fill="#d4a90b" stroke="#b8900a" stroke-width="0.5"/><g stroke="#fff" stroke-width="1.1" stroke-linecap="round"><line x1="19.50" y1="20.50" x2="19.50" y2="22.80"/><line x1="18.63" y1="20.00" x2="16.64" y2="21.15"/><line x1="18.63" y1="19.00" x2="16.64" y2="17.85"/><line x1="19.50" y1="18.50" x2="19.50" y2="16.20"/><line x1="20.37" y1="19.00" x2="22.36" y2="17.85"/><line x1="20.37" y1="20.00" x2="22.36" y2="21.15"/></g></svg>
<svg class="a" style="left:150px;top:98px" width="24" height="24" viewBox="0 0 24 24"><rect x="1.5" y="6" width="18" height="12" rx="1" fill="#6b97c9" stroke="#3f6d9e" stroke-width="0.8"/><g stroke="#2e3f5e" stroke-width="1"><line x1="4.5" y1="2" x2="4.5" y2="6"/><line x1="8" y1="2" x2="8" y2="6"/><line x1="11.5" y1="2" x2="11.5" y2="6"/><line x1="15" y1="2" x2="15" y2="6"/><line x1="4.5" y1="18" x2="4.5" y2="22"/><line x1="8" y1="18" x2="8" y2="22"/><line x1="11.5" y1="18" x2="11.5" y2="22"/></g><rect x="15" y="15" width="9" height="9" rx="1.6" fill="#d4a90b" stroke="#b8900a" stroke-width="0.5"/><g stroke="#fff" stroke-width="1.1" stroke-linecap="round"><line x1="19.50" y1="20.50" x2="19.50" y2="22.80"/><line x1="18.63" y1="20.00" x2="16.64" y2="21.15"/><line x1="18.63" y1="19.00" x2="16.64" y2="17.85"/><line x1="19.50" y1="18.50" x2="19.50" y2="16.20"/><line x1="20.37" y1="19.00" x2="22.36" y2="17.85"/><line x1="20.37" y1="20.00" x2="22.36" y2="21.15"/></g></svg>
<svg class="a" style="left:200px;top:98px" width="24" height="24" viewBox="0 0 24 24"><g opacity="0.55"><path d="M14 2 L19 5 L8 21 L5 23 L4.5 19 Z" fill="#d3d1cc" stroke="#c2c0ba" stroke-width="0.8"/><path d="M19 2 L24 5 L13 21 L10 23 L9.5 19 Z" fill="#d3d1cc" stroke="#c2c0ba" stroke-width="0.8"/></g><path d="M19 19.5 H23 L21 21.5 Z" fill="#c8c6c0"/></svg>
<svg class="a" style="left:233px;top:98px" width="24" height="24" viewBox="0 0 24 24"><path d="M2.98 17.9 L16.88 0.33 L21.12 3.67 L7.22 21.24 Z" fill="#f3dc2a" stroke="#4a4a00" stroke-width="0.9" stroke-linejoin="round"/><path d="M15.02 2.69 L16.88 0.33 L21.12 3.67 L19.26 6.03 Z" fill="#e0e0dc" stroke="#4a4a00" stroke-width="0.7"/><line x1="5.1" y1="19.57" x2="17.14" y2="4.36" stroke="#c4a000" stroke-width="1"/><path d="M2.98 17.9 L7.22 21.24 L2 23.5 Z" fill="#d8c9a8" stroke="#4a4a00" stroke-width="0.7"/><path d="M2 23.5 L3 21.2 L4.3 22.2 Z" fill="#333"/></svg>
<svg class="a" style="left:264px;top:98px" width="24" height="24" viewBox="0 0 24 24"><rect x="2" y="1.5" width="18" height="19" rx="2" fill="#d6d6d4" stroke="#c8c8c6" stroke-width="0.8"/><rect x="5" y="2.5" width="12" height="7" fill="#efefed"/><g stroke="#d4d4d2" stroke-width="0.8"><line x1="6.5" y1="4.5" x2="15.5" y2="4.5"/><line x1="6.5" y1="6.5" x2="15.5" y2="6.5"/></g><rect x="5.5" y="13" width="10" height="7" fill="#efefed"/><rect x="7" y="14.5" width="2" height="4" fill="#d0d0ce"/><path d="M20 9.5 L22.5 11.5 L14 22.5 L11.5 23.5 L12 21 Z" fill="#e2d8d0" stroke="#d0c6bc" stroke-width="0.7"/></svg>
<svg class="a" style="left:297px;top:98px" width="24" height="24" viewBox="0 0 24 24"><path d="M3 4.5 C5 1 10 1.5 13 2.5 C17 1 22 1.5 22 5.5 C22.5 8.5 19 10 18 12 C16 14 12 12.5 9 14.5 C6 16 1.5 13 1.5 9 C1.5 7 2 5.5 3 4.5 Z" fill="#dcdcd8" stroke="#cfcfcb" stroke-width="0.8"/><rect x="12.5" y="12.5" width="11" height="11" rx="1.8" fill="#cfccc4" stroke="#b08a00" stroke-width="0.5"/><g stroke="#fff" stroke-width="1.1" stroke-linecap="round"><line x1="19.91" y1="19.10" x2="21.81" y2="20.20"/><line x1="18.00" y1="20.20" x2="18.00" y2="22.40"/><line x1="16.09" y1="19.10" x2="14.19" y2="20.20"/><line x1="16.09" y1="16.90" x2="14.19" y2="15.80"/><line x1="18.00" y1="15.80" x2="18.00" y2="13.60"/><line x1="19.91" y1="16.90" x2="21.81" y2="15.80"/></g><circle cx="18.0" cy="18.0" r="2.50" fill="none" stroke="#fff" stroke-width="1.1"/></svg>
<svg class="a" style="left:330px;top:98px" width="24" height="24" viewBox="0 0 24 24"><rect x="2" y="2" width="5" height="5" fill="#f2f2f0" stroke="#cfcdc8" stroke-width="0.9"/><circle cx="4.5" cy="4.5" r="1.2" fill="none" stroke="#c8c6c0" stroke-width="0.8"/><line x1="7" y1="4.5" x2="17" y2="4.5" stroke="#d0cec9" stroke-width="1"/><line x1="4.5" y1="7" x2="1" y2="22" stroke="#d0cec9" stroke-width="0.8"/><path d="M7 12 L11 8 L21 20 L18 22 Z" fill="#d3d0c6"/><path d="M10 22 L20 11 L22 13 L13 23 Z" fill="#ccc9bf"/></svg>
<svg class="a" style="left:375px;top:98px" width="24" height="24" viewBox="0 0 24 24"><g fill="#dcdad0" stroke="#cfccc0" stroke-width="0.6"><rect x="1" y="2" width="20" height="5"/><rect x="1" y="9" width="20" height="5"/><rect x="1" y="16" width="20" height="5"/></g><path d="M19 1 L22 3 L12 21 L9 23 L9.5 19.5 Z" fill="#e8e4de" stroke="#cfc8c0" stroke-width="0.8"/></svg>
<svg class="a" style="left:408px;top:98px" width="24" height="24" viewBox="0 0 24 24"><g fill="none" stroke="#dcc8c8" stroke-width="1.5"><path d="M4 6 H20"/><path d="M9 6 V3.5 H15 V6"/><path d="M5.5 6.5 L7 22 H17 L18.5 6.5"/><line x1="10" y1="9" x2="10" y2="19"/><line x1="14" y1="9" x2="14" y2="19"/></g></svg>
<svg class="a" style="left:441px;top:98px" width="24" height="24" viewBox="0 0 24 24"><g fill="none" stroke="#cdcbc6" stroke-width="1.3"><path d="M1 9 L19 16"/><path d="M3 16 L19 8"/><circle cx="20" cy="7" r="2.5"/><circle cx="20" cy="17" r="2.5"/></g></svg>
<svg class="a" style="left:474px;top:98px" width="24" height="24" viewBox="0 0 24 24"><g fill="#f6f6f4" stroke="#d0cec9" stroke-width="1"><path d="M7 1.5 H14 L18 5.5 V16 H7 Z"/><path d="M2 6.5 H11 L14 9.5 V22 H2 Z"/></g><g stroke="#d0cec9" stroke-width="0.8"><line x1="4" y1="12" x2="11" y2="12"/><line x1="4" y1="14.5" x2="11" y2="14.5"/><line x1="4" y1="17" x2="11" y2="17"/><line x1="4" y1="19.5" x2="9" y2="19.5"/></g></svg>
<svg class="a" style="left:507px;top:98px" width="24" height="24" viewBox="0 0 24 24"><rect x="3" y="3" width="16" height="20" rx="1.5" fill="#eeeeec" stroke="#d0cec9" stroke-width="1"/><rect x="7" y="1" width="8" height="4" rx="1" fill="#eee" stroke="#d0cec9"/><path d="M5 6 H14 L17 9 V21 H5 Z" fill="#fafaf8" stroke="#d0cec9" stroke-width="0.8"/><g stroke="#d0cec9" stroke-width="0.8"><line x1="7" y1="12" x2="15" y2="12"/><line x1="7" y1="14.5" x2="15" y2="14.5"/><line x1="7" y1="17" x2="15" y2="17"/></g></svg>
<svg class="a" style="left:540px;top:98px" width="24" height="24" viewBox="0 0 24 24"><path d="M9 3 L1 10 L9 17 V13 C14 13 17 14 18 20 C22 14 20 7 9 7 Z" fill="#dcd4ce"/></svg>
<svg class="a" style="left:573px;top:98px" width="24" height="24" viewBox="0 0 24 24"><path d="M15 3 L23 10 L15 17 V13 C10 13 7 14 6 20 C2 14 4 7 15 7 Z" fill="#d8dcd8"/></svg>
<svg class="a" style="left:620px;top:98px" width="24" height="24" viewBox="0 0 24 24"><path d="M5 6 H22 V16 H5 L1 11.0 Z" fill="#fce94f" stroke="#c4a000" stroke-width="0.9"/><text x="13.5" y="13.8" text-anchor="middle" font-family="Liberation Sans" font-weight="bold" font-size="8.5" fill="#2e3436">abc</text></svg>
<svg class="a" style="left:655px;top:98px" width="24" height="24" viewBox="0 0 24 24"><circle cx="7.5" cy="8" r="6.5" fill="#d42020"/><path d="M7.5 8 L7.5 1.5 A6.5 6.5 0 0 0 1 8 Z" fill="#f0d020"/><path d="M7.5 8 L1 8 A6.5 6.5 0 0 0 11 13.5 Z" fill="#30a040"/><rect x="9" y="16" width="3.5" height="7" fill="#f0c020"/><rect x="13" y="9" width="3.5" height="14" fill="#30a040"/><rect x="17" y="15" width="3.5" height="8" fill="#c01818"/></svg>
<svg class="a" style="left:689px;top:98px" width="24" height="24" viewBox="0 0 24 24"><path d="M5 4 H21.5 V15 H5 L1 9.5 Z" fill="#fce94f" stroke="#c4a000" stroke-width="0.9"/><text x="13.25" y="12.8" text-anchor="middle" font-family="Liberation Sans" font-weight="bold" font-size="9" fill="#2e3436">ab</text><circle cx="19" cy="18.5" r="4.6" fill="#b82020" stroke="#8a1010" stroke-width="0.5"/><circle cx="17.8" cy="17.2" r="1.3" fill="#e06060"/><rect x="17.6" y="8" width="2.2" height="6" rx="1" fill="#fff" stroke="#999" stroke-width="0.5"/></svg>
<svg class="a" style="left:721px;top:98px" width="24" height="24" viewBox="0 0 24 24"><path d="M5 4.5 H22 V14.5 H5 L1 9.5 Z" fill="#e8e6dc" stroke="#d6d3c8" stroke-width="0.9"/><text x="13.5" y="12.3" text-anchor="middle" font-family="Liberation Sans" font-weight="bold" font-size="8.5" fill="#c4c2bc">ab</text><circle cx="17" cy="18" r="4.5" fill="#dcd6d6"/><rect x="15.8" y="9" width="2.4" height="6" fill="#eee" stroke="#d0ccc8" stroke-width="0.5"/></svg>
<svg class="a" style="left:753px;top:98px" width="24" height="24" viewBox="0 0 24 24"><path d="M5 4.5 H22 V14.5 H5 L1 9.5 Z" fill="#e8e6dc" stroke="#d6d3c8" stroke-width="0.9"/><text x="13.5" y="12.3" text-anchor="middle" font-family="Liberation Sans" font-weight="bold" font-size="8.5" fill="#c4c2bc">abc</text><path d="M8 19 Q14 13 22 19 Q14 24 8 19 Z" fill="#f4f4f2" stroke="#d0cec9" stroke-width="0.8"/><circle cx="15" cy="19" r="2.3" fill="#cac8c2"/></svg>
<svg class="a" style="left:787px;top:98px" width="24" height="24" viewBox="0 0 24 24"><path d="M5 4.5 H22 V14.5 H5 L1 9.5 Z" fill="#e8e6dc" stroke="#d6d3c8" stroke-width="0.9"/><text x="13.5" y="12.3" text-anchor="middle" font-family="Liberation Sans" font-weight="bold" font-size="8.5" fill="#c4c2bc">abc</text><rect x="13" y="13" width="10.5" height="10.5" rx="1.5" fill="#cac8c2"/><path d="M15 17 H18.5 V15 L22 18.25 L18.5 21.5 V19.5 H15 Z" fill="#fff"/></svg>
<svg class="a" style="left:820px;top:98px" width="24" height="24" viewBox="0 0 24 24"><path d="M5 4.5 H22 V14.5 H5 L1 9.5 Z" fill="#e8e6dc" stroke="#d6d3c8" stroke-width="0.9"/><text x="13.5" y="12.3" text-anchor="middle" font-family="Liberation Sans" font-weight="bold" font-size="8.5" fill="#c4c2bc">abc</text><rect x="13" y="13" width="10.5" height="10.5" rx="1.5" fill="#cac8c2"/><path d="M21 18.5 A3 3 0 1 1 18 15.5" fill="none" stroke="#fff" stroke-width="1.5"/></svg>
<svg class="a" style="left:853px;top:98px" width="24" height="24" viewBox="0 0 24 24"><path d="M5 4.5 H22 V14.5 H5 L1 9.5 Z" fill="#e8e6dc" stroke="#d6d3c8" stroke-width="0.9"/><text x="13.5" y="12.3" text-anchor="middle" font-family="Liberation Sans" font-weight="bold" font-size="8.5" fill="#c4c2bc">abc</text><rect x="13" y="13" width="10.5" height="10.5" rx="1.5" fill="#cac8c2"/><line x1="15.5" y1="21" x2="21.5" y2="15" stroke="#fff" stroke-width="1.8"/></svg>
<svg class="a" style="left:902px;top:98px" width="24" height="24" viewBox="0 0 24 24"><circle cx="12" cy="10" r="9.5" fill="#5b8ec6" stroke="#2e3f5e" stroke-width="0.9"/><g stroke="#cfe0f3" stroke-width="0.7" fill="none"><ellipse cx="12" cy="10" rx="4" ry="9.5"/><line x1="2.5" y1="10" x2="21.5" y2="10"/><line x1="4" y1="5" x2="20" y2="5"/><line x1="4" y1="15" x2="20" y2="15"/></g><g fill="#111"><ellipse cx="6.5" cy="20" rx="4.5" ry="3"/><ellipse cx="17.5" cy="20" rx="4.5" ry="3"/><rect x="9" y="15" width="6" height="4"/><path d="M5 17 L8 13 H10 V18 Z M19 17 L16 13 H14 V18 Z"/></g><ellipse cx="6.5" cy="20.5" rx="2.5" ry="1.4" fill="#fff"/><ellipse cx="17.5" cy="20.5" rx="2.5" ry="1.4" fill="#fff"/></svg>
<svg class="a" style="left:952px;top:98px" width="24" height="24" viewBox="0 0 24 24"><path d="M11.5 1 C7 1 7.5 3 7.5 3 V6 H12 V7 H4.5 C4.5 7 1.5 6.7 1.5 11.5 C1.5 16.3 4 16 4 16 H6 V13 C6 13 6 10.5 8.5 10.5 H13 C13 10.5 15.5 10.5 15.5 8 V3.5 C15.5 3.5 16 1 11.5 1 Z" fill="#3b73a8"/><circle cx="9.5" cy="3.3" r="0.9" fill="#fff"/><path d="M12 21.5 C16.5 21.5 16 19.5 16 19.5 V16.5 H11.5 V15.5 H19 C19 15.5 22 15.8 22 11 C22 6.2 19.5 6.5 19.5 6.5 H17.5 V9.5 C17.5 9.5 17.5 12 15 12 H10.5 C10.5 12 8 12 8 14.5 V19 C8 19 7.5 21.5 12 21.5 Z" fill="#f7ce3e"/><circle cx="14" cy="19.2" r="0.9" fill="#fff"/><path d="M16.5 18 L22 20.5 L16.5 23" fill="none" stroke="#333" stroke-width="1"/></svg>
<svg class="a" style="left:1000px;top:98px" width="24" height="24" viewBox="0 0 24 24"><rect x="2" y="1" width="20" height="22" fill="#6b97c9" stroke="#1f2d3d" stroke-width="1"/><rect x="2" y="1" width="5" height="22" fill="#2a3a4e"/><text x="14.5" y="16.5" text-anchor="middle" font-family="Liberation Serif" font-size="14" fill="#fff">?</text></svg>
<svg class="a" style="left:359px;top:107px" width="10" height="6"><path d="M0.5 0.5 H9.5 L5 5.5 Z" fill="#c8c6c0"/></svg>
<svg class="a" style="left:266px;top:133.5px" width="28" height="13"><rect x="1.5" y="1" width="10.5" height="10.5" rx="2" fill="none" stroke="#6f6c67" stroke-width="1"/><rect x="5.5" y="3.5" width="4" height="4" fill="none" stroke="#6f6c67" stroke-width="0.9"/><rect x="3.8" y="5.3" width="4" height="4" fill="#efebe7" stroke="#6f6c67" stroke-width="0.9"/><rect x="15.5" y="1" width="10.5" height="10.5" rx="2" fill="none" stroke="#6f6c67" stroke-width="1"/><path d="M18.3 3.8 L23.2 8.7 M23.2 3.8 L18.3 8.7" stroke="#6f6c67" stroke-width="1.9"/></svg>
<svg class="a" style="left:8px;top:156px" width="16" height="16" viewBox="0 0 24 24"><rect x="1.5" y="1.5" width="17" height="17" fill="#fff" stroke="#888" stroke-width="1.3"/><circle cx="18" cy="19" r="4.3" fill="#5fa05c" stroke="#fff" stroke-width="1"/></svg>
<svg class="a" style="left:33px;top:156px" width="16" height="16" viewBox="0 0 24 24"><g fill="none" stroke="#3f78c0" stroke-width="4.8"><path d="M3.6 13 A8.4 8.4 0 0 1 16.2 4.7"/><path d="M20.4 11 A8.4 8.4 0 0 1 7.8 19.3"/></g><g fill="none" stroke="#6aa4e6" stroke-width="2.8"><path d="M3.6 13 A8.4 8.4 0 0 1 16.2 4.7"/><path d="M20.4 11 A8.4 8.4 0 0 1 7.8 19.3"/></g><path d="M15 1.8 L22.8 1.2 L21.5 10 Z" fill="#5b9ae0" stroke="#3f6d9e" stroke-width="0.6"/><path d="M9 22.2 L1.2 22.8 L2.5 14 Z" fill="#5b9ae0" stroke="#3f6d9e" stroke-width="0.6"/></svg>
<svg class="a" style="left:58px;top:156px" width="16" height="16" viewBox="0 0 24 24"><path d="M2 1.5 H22 V4 L14 12 V23 L10 20 V12 L2 4 Z" fill="#6b97c9" stroke="#3f6d9e" stroke-width="0.8"/><rect x="2" y="1.5" width="20" height="3" fill="#fce94f"/></svg>
<svg class="a" style="left:84px;top:156px" width="16" height="16" viewBox="0 0 24 24"><g fill="#fff" stroke="#999" stroke-width="0.9"><rect x="1.5" y="4" width="3" height="18"/></g><rect x="2.5" y="9" width="3" height="3" fill="#f0a020"/><rect x="2.5" y="17" width="3" height="3" fill="#f0a020"/><path d="M14 1 L21 9 H17 V22 H11 V9 H7 Z" fill="#6b97c9" stroke="#3f6d9e" stroke-width="0.8"/></svg>
<svg class="a" style="left:108px;top:156px" width="16" height="16" viewBox="0 0 24 24"><circle cx="12" cy="12" r="10.5" fill="#6b97c9" stroke="#3f6d9e" stroke-width="0.7"/><text x="12" y="18" text-anchor="middle" font-family="Liberation Serif" font-style="italic" font-weight="bold" font-size="15" fill="#fff">i</text></svg>
<div class="a" style="left:0;top:180px;width:294px;height:338px;background:#fff;border:1px solid #aaa69f"></div>
<svg class="a" style="left:24px;top:182px" width="16" height="16" viewBox="0 0 16 16"><path d="M8 0.8 L10.1 5.6 L15.2 6 L11.3 9.4 L12.5 14.5 L8 11.8 L3.5 14.5 L4.7 9.4 L0.8 6 L5.9 5.6 Z" fill="#fce94f" stroke="#c4a000" stroke-width="0.8" stroke-linejoin="round"/></svg>
<svg class="a" style="left:24px;top:201px" width="16" height="16" viewBox="0 0 16 16"><path d="M1.5 2 H6 L7.5 3.5 H14.5 V14.5 H1.5 Z" fill="#eeeeec" stroke="#888a85" stroke-width="0.9"/><path d="M4.5 11.5 V8.5 L8 5.5 L11.5 8.5 V11.5 Z" fill="#fff" stroke="#111" stroke-width="0.9"/></svg>
<svg class="a" style="left:8px;top:204px" width="6" height="10"><path d="M0.5 0.5 L5.5 5 L0.5 9.5 Z" fill="#3c3c3c"/></svg>
<svg class="a" style="left:24px;top:220px" width="16" height="16" viewBox="0 0 16 16"><path d="M1.5 2 H6 L7.5 3.5 H14.5 V14.5 H1.5 Z" fill="#eeeeec" stroke="#888a85" stroke-width="0.9"/></svg>
<svg class="a" style="left:8px;top:223px" width="6" height="10"><path d="M0.5 0.5 L5.5 5 L0.5 9.5 Z" fill="#3c3c3c"/></svg>
<svg class="a" style="left:24px;top:239px" width="16" height="16" viewBox="0 0 16 16"><path d="M0.5 8 L8 11 V15.5 L0.5 12.5 Z" fill="#d8b820" stroke="#333" stroke-width="0.6"/><path d="M8 11 L15.5 8 V12.5 L8 15.5 Z" fill="#f7e26a" stroke="#333" stroke-width="0.6"/><path d="M0.5 8 L8 5 L15.5 8 L8 11 Z" fill="#e8d050" stroke="#333" stroke-width="0.6"/><circle cx="8" cy="5.5" r="4.8" fill="#6b97c9" stroke="#3f6d9e" stroke-width="0.5"/><path d="M5.5 4 Q7 2.5 8.5 3.2 Q8 5 6.5 6 Z M9 5 Q11 4.5 11.5 6 Q10 7.5 9 6 Z" fill="#244a7a"/></svg>
<svg class="a" style="left:24px;top:258px" width="16" height="16" viewBox="0 0 16 16"><path d="M1 15.5 C3 10 6 5 15 0.8 C13.5 5 10 10 3 12.5 Z" fill="#8fb3dc" stroke="#3f6d9e" stroke-width="0.7"/></svg>
<svg class="a" style="left:24px;top:277px" width="16" height="16" viewBox="0 0 16 16"><path d="M1 3.5 C1 0.5 4 0 7 0.8 C9 0 12.5 0 14.5 1.5 C16 3 16 6 15 8 L16 8.3 V10 L13.5 10 C13 12.5 12.5 15 11.5 15.7 L8.5 15.7 C7.5 14.5 7.3 12 7.5 10.5 L4.5 11.5 C2 11 1 7 1 3.5 Z" fill="#6b97c9" stroke="#2e4a6e" stroke-width="0.8"/><path d="M5 1.5 C4 4 4 7.5 5 10.5 M9 3 C8.5 6 9 9 9.8 12" fill="none" stroke="#2e4a6e" stroke-width="0.8"/></svg>
<svg class="a" style="left:24px;top:296px" width="16" height="16" viewBox="0 0 16 16"><path d="M0.5 0.3 C6 0.5 12 3 15.7 7.4 C11 10 5 12 0.5 14 C3 10 3.5 5 0.5 0.3 Z" fill="#6b97c9" stroke="#3f6d9e" stroke-width="0.7"/><path d="M5 1 C6.5 4.5 6.5 9 5 12.3 M8.8 2.2 C10 5 10 8.5 8.8 10.8 M12.2 4 C13 6 13 7.5 12.3 9" fill="none" stroke="#2e4a6e" stroke-width="0.8"/></svg>
<svg class="a" style="left:24px;top:315px" width="16" height="16" viewBox="0 0 16 16"><rect x="0.5" y="0.5" width="15" height="15" rx="2.5" fill="#6b97c9"/><text x="8" y="10.8" text-anchor="middle" font-family="Liberation Sans" font-size="7" fill="#e8f0f8">DB2</text></svg>
<svg class="a" style="left:24px;top:334px" width="16" height="16" viewBox="0 0 16 16"><ellipse cx="8" cy="7.9" rx="7.5" ry="6.6" fill="#c4d8ef" stroke="#5b8ec6" stroke-width="1"/><path d="M2.5 5 Q3.8 4 5.3 4.6 Q5.5 6.2 4.2 7 Q3 6.8 2.5 5 Z M3.6 8.6 Q5 8.4 5.4 9.6 Q5 11.5 4.3 12.6 Q3.6 10.5 3.6 8.6 Z M7 4.4 Q8.5 3.8 9.8 4.8 Q9.5 6.5 9.6 8 Q9.4 10.5 8.6 12.3 Q7.5 10 7.6 8 Q6.8 6 7 4.4 Z M10 3.5 Q12.5 3.2 13.6 5 Q13.3 7 12 8 Q10.8 7 10 5.5 Z" fill="#2e4f80"/></svg>
<svg class="a" style="left:24px;top:353px" width="16" height="16" viewBox="0 0 16 16"><ellipse cx="8" cy="7.9" rx="7.5" ry="6.6" fill="#c4d8ef" stroke="#5b8ec6" stroke-width="1"/><path d="M2.5 5 Q3.8 4 5.3 4.6 Q5.5 6.2 4.2 7 Q3 6.8 2.5 5 Z M3.6 8.6 Q5 8.4 5.4 9.6 Q5 11.5 4.3 12.6 Q3.6 10.5 3.6 8.6 Z M7 4.4 Q8.5 3.8 9.8 4.8 Q9.5 6.5 9.6 8 Q9.4 10.5 8.6 12.3 Q7.5 10 7.6 8 Q6.8 6 7 4.4 Z M10 3.5 Q12.5 3.2 13.6 5 Q13.3 7 12 8 Q10.8 7 10 5.5 Z" fill="#2e4f80"/></svg>
<svg class="a" style="left:8px;top:356px" width="6" height="10"><path d="M0.5 0.5 L5.5 5 L0.5 9.5 Z" fill="#3c3c3c"/></svg>
<svg class="a" style="left:24px;top:372px" width="16" height="16" viewBox="0 0 16 16"><ellipse cx="8" cy="7.9" rx="7.5" ry="6.8" fill="#2a4670" stroke="#1e3452" stroke-width="0.9"/><ellipse cx="8" cy="7.9" rx="6" ry="3.6" fill="#8fb3dc"/><g fill="none" stroke="#d8e6f6" stroke-width="0.7"><ellipse cx="8" cy="7.9" rx="3.3" ry="6.8"/><line x1="0.5" y1="7.9" x2="15.5" y2="7.9"/><line x1="8" y1="1" x2="8" y2="14.8"/></g></svg>
<svg class="a" style="left:24px;top:391px" width="16" height="16" viewBox="0 0 16 16"><circle cx="8" cy="8" r="7" fill="#f4f8fc" stroke="#6b97c9" stroke-width="0.9"/><g fill="none" stroke="#8fb3dc" stroke-width="0.6"><ellipse cx="8" cy="8" rx="3.5" ry="7"/><line x1="1" y1="8" x2="15" y2="8"/></g><path d="M3.5 4 L7 12 L10 4.5 L12.5 4.5" fill="none" stroke="#2e3f5e" stroke-width="0.9"/></svg>
<svg class="a" style="left:24px;top:410px" width="16" height="16" viewBox="0 0 16 16"><circle cx="8" cy="8" r="7" fill="#fff" stroke="#6b97c9" stroke-width="0.9"/><g fill="none" stroke="#6b97c9" stroke-width="0.6"><ellipse cx="8" cy="8" rx="3.5" ry="7"/><line x1="1" y1="8" x2="15" y2="8"/><line x1="2" y1="4.5" x2="14" y2="4.5"/><line x1="2" y1="11.5" x2="14" y2="11.5"/></g></svg>
<svg class="a" style="left:24px;top:429px" width="16" height="16" viewBox="0 0 16 16"><ellipse cx="8" cy="7.9" rx="7.5" ry="6.6" fill="#a8c4e8" stroke="#5b8ec6" stroke-width="1"/><path d="M2.5 5 Q3.8 4 5.3 4.6 Q5.5 6.2 4.2 7 Q3 6.8 2.5 5 Z M3.6 8.6 Q5 8.4 5.4 9.6 Q5 11.5 4.3 12.6 Q3.6 10.5 3.6 8.6 Z M7 4.4 Q8.5 3.8 9.8 4.8 Q9.5 6.5 9.6 8 Q9.4 10.5 8.6 12.3 Q7.5 10 7.6 8 Q6.8 6 7 4.4 Z M10 3.5 Q12.5 3.2 13.6 5 Q13.3 7 12 8 Q10.8 7 10 5.5 Z" fill="#2e4f80"/><circle cx="4.5" cy="11.5" r="3.6" fill="#fff" opacity="0.6"/><path d="M2.5 9.5 Q4.5 8.5 6 10 Q5.5 12.5 4 14.5 Q2.2 12.5 2.5 9.5 Z" fill="#222"/></svg>
<svg class="a" style="left:24px;top:448px" width="16" height="16" viewBox="0 0 16 16"><ellipse cx="8" cy="7.9" rx="7.5" ry="6.6" fill="#e4eef8" stroke="#5b8ec6" stroke-width="1"/><path d="M2.5 5 Q3.8 4 5.3 4.6 Q5.5 6.2 4.2 7 Q3 6.8 2.5 5 Z M3.6 8.6 Q5 8.4 5.4 9.6 Q5 11.5 4.3 12.6 Q3.6 10.5 3.6 8.6 Z M7 4.4 Q8.5 3.8 9.8 4.8 Q9.5 6.5 9.6 8 Q9.4 10.5 8.6 12.3 Q7.5 10 7.6 8 Q6.8 6 7 4.4 Z M10 3.5 Q12.5 3.2 13.6 5 Q13.3 7 12 8 Q10.8 7 10 5.5 Z" fill="#4a6a90"/><circle cx="4.5" cy="11.5" r="3.6" fill="#fff" opacity="0.6"/><path d="M2.5 9.5 Q4.5 8.5 6 10 Q5.5 12.5 4 14.5 Q2.2 12.5 2.5 9.5 Z" fill="#222"/></svg>
<svg class="a" style="left:24px;top:467px" width="16" height="16" viewBox="0 0 16 16"><g stroke="#6b97c9" stroke-width="2.2" stroke-linecap="round"><line x1="8" y1="1.5" x2="8" y2="14.5"/><line x1="2.5" y1="4.5" x2="13.5" y2="11.5"/><line x1="2.5" y1="11.5" x2="13.5" y2="4.5"/></g><circle cx="8" cy="8" r="2" fill="#fff"/></svg>
<svg class="a" style="left:140px;top:520px" width="18" height="2"><rect x="0" y="0" width="1" height="1" fill="#9a968f"/><rect x="3" y="0" width="1" height="1" fill="#9a968f"/><rect x="6" y="0" width="1" height="1" fill="#9a968f"/><rect x="9" y="0" width="1" height="1" fill="#9a968f"/><rect x="12" y="0" width="1" height="1" fill="#9a968f"/><rect x="15" y="0" width="1" height="1" fill="#9a968f"/></svg>
<svg class="a" style="left:297px;top:479px" width="2" height="18"><rect x="0" y="0" width="1" height="1" fill="#9a968f"/><rect x="0" y="3" width="1" height="1" fill="#9a968f"/><rect x="0" y="6" width="1" height="1" fill="#9a968f"/><rect x="0" y="9" width="1" height="1" fill="#9a968f"/><rect x="0" y="12" width="1" height="1" fill="#9a968f"/><rect x="0" y="15" width="1" height="1" fill="#9a968f"/></svg>
<svg class="a" style="left:266px;top:527.5px" width="28" height="13"><rect x="1.5" y="1" width="10.5" height="10.5" rx="2" fill="none" stroke="#6f6c67" stroke-width="1"/><rect x="5.5" y="3.5" width="4" height="4" fill="none" stroke="#6f6c67" stroke-width="0.9"/><rect x="3.8" y="5.3" width="4" height="4" fill="#efebe7" stroke="#6f6c67" stroke-width="0.9"/><rect x="15.5" y="1" width="10.5" height="10.5" rx="2" fill="none" stroke="#6f6c67" stroke-width="1"/><path d="M18.3 3.8 L23.2 8.7 M23.2 3.8 L18.3 8.7" stroke="#6f6c67" stroke-width="1.9"/></svg>
<svg class="a" style="left:8px;top:550px" width="16" height="16" viewBox="0 0 24 24"><path d="M1 13 L10 8 L15 15 L6 20 Z" fill="#e84040"/><path d="M4 10 L12 5 L16 11 L8 16 Z" fill="#f0d030"/><path d="M3 16 L8 11 L13 17 L9 21 Z" fill="#5080d0" opacity="0.8"/><path d="M9 12 L14 16 L18 12 L13 9 Z" fill="#c8a060"/><line x1="15" y1="11" x2="22" y2="3" stroke="#d0a040" stroke-width="2.5"/></svg>
<svg class="a" style="left:33px;top:550px" width="16" height="16" viewBox="0 0 24 24"><g fill="none" stroke="#777" stroke-width="1"><path d="M2 9 V22 H15"/><path d="M5 6 V19 H18 V6 Z" fill="#f0f0ee"/></g><path d="M9 3 V14 C9 16 13 16 13 14 V5 C13 3.5 11 3.5 11 5 V13" fill="none" stroke="#3f6d9e" stroke-width="1.1"/><circle cx="19" cy="19" r="4" fill="#6aa765" stroke="#fff" stroke-width="0.8"/><path d="M19 16.8 V21.2 M16.8 19 H21.2" stroke="#fff" stroke-width="1.3"/></svg>
<svg class="a" style="left:59px;top:550px" width="16" height="16" viewBox="0 0 24 24"><path d="M1 11 Q12 1 23 11 Q12 21 1 11 Z" fill="#eeeeec" stroke="#888" stroke-width="1"/><circle cx="12" cy="11" r="4.5" fill="#5b8ec6"/><circle cx="12" cy="11" r="2" fill="#111"/><path d="M16 18 H23 L19.5 22 Z" fill="#333"/></svg>
<svg class="a" style="left:83px;top:550px" width="16" height="16" viewBox="0 0 24 24"><path d="M2 1.5 H22 V4 L14 12 V23 L10 20 V12 L2 4 Z" fill="#6b97c9" stroke="#3f6d9e" stroke-width="0.8"/><rect x="2" y="1.5" width="20" height="3" fill="#fce94f"/></svg>
<svg class="a" style="left:109px;top:550px" width="16" height="16" viewBox="0 0 24 24"><text x="0" y="17" font-family="Liberation Serif" font-size="26" fill="#6a2a80">&#949;</text><path d="M12 14 H22 V22 H12 Z" fill="#999" /><path d="M14 14 V22 M20 14 V22" stroke="#ccc" stroke-width="1.2"/></svg>
<svg class="a" style="left:146px;top:550px" width="16" height="16" viewBox="0 0 24 24"><g fill="#fff" stroke="#999" stroke-width="0.9"><rect x="1.5" y="2" width="3" height="18"/></g><rect x="2.5" y="7" width="3" height="3" fill="#f0a020"/><rect x="2.5" y="15" width="3" height="3" fill="#f0a020"/><path d="M14 23 L21 15 H17 V2 H11 V15 H7 Z" fill="#6b97c9" stroke="#3f6d9e" stroke-width="0.8"/></svg>
<svg class="a" style="left:171px;top:550px" width="16" height="16" viewBox="0 0 24 24"><g fill="#fff" stroke="#999" stroke-width="0.9"><rect x="1.5" y="4" width="3" height="18"/></g><rect x="2.5" y="9" width="3" height="3" fill="#f0a020"/><rect x="2.5" y="17" width="3" height="3" fill="#f0a020"/><path d="M14 1 L21 9 H17 V22 H11 V9 H7 Z" fill="#6b97c9" stroke="#3f6d9e" stroke-width="0.8"/></svg>
<svg class="a" style="left:196px;top:550px" width="16" height="16" viewBox="0 0 24 24"><rect x="1.5" y="1.5" width="15" height="15" fill="#fff" stroke="#888" stroke-width="1"/><rect x="13" y="14" width="10" height="7" rx="1.5" fill="#e03030"/><line x1="15" y1="17.5" x2="21" y2="17.5" stroke="#fff" stroke-width="1.5"/></svg>
<svg class="a" style="left:129px;top:555px" width="10" height="6"><path d="M0.5 0.5 H9.5 L5 5.5 Z" fill="#2e3436"/></svg>
<div class="a" style="left:0;top:574px;width:294px;height:267px;background:#fff;border:1px solid #aaa69f"></div>
<div class="a" style="left:1px;top:575px;width:292px;height:19px;background:#308cc6"></div>
<svg class="a" style="left:24px;top:577px" width="14" height="14"><rect x="0.5" y="0.5" width="13" height="13" fill="#fff" stroke="#888"/><path d="M3 7.5 L5.8 10.5 L11 3" fill="none" stroke="#111" stroke-width="1.8"/></svg>
<div class="a" style="left:44px;top:576px;width:16px;height:16px;background:#b89fb8;border:1px solid #555"></div>
<div class="a" style="left:66.4px;top:591px;width:116.6px;height:1.2px;background:#fff"></div>
<div class="a" style="left:300px;top:130px;width:1061px;height:711px;background:#fff;border:1px solid #aca8a3"></div>
<svg class="a" style="left:301px;top:131px" width="1060" height="709" viewBox="301 131 1060 709"><g fill="#f3a5b0" stroke="#2e2e2e" stroke-width="0.95"><polygon points="327,192.5 366.25,148 375.5,154 415,156.5 435.75,156.25 486.25,170 495.25,153.5 635.75,267 656.5,276.5 671.5,325 846.5,308 895,283.5 1080.5,301.25 1272.5,312.5 1329.5,320 1087,355 1272.5,392.5 1318,405 1227.5,446.75 1271.25,476.25 1282,487.5 1272.5,488.25 1142.5,486.75 1138.75,495.75 1126.25,496.25 1111.25,488 1088,492.5 1085.5,497.5 1075.5,497.5 1072.5,470.5 1058.75,465.75 1037.5,465 1020,465 970,470 950,457.5 891.25,445.5 843.75,452 830,437.5 683.75,405 580,374.5 560,365.5 535.25,336 526.5,343 528.5,353.5 446.25,299.25 418.75,270.75 338.25,203.75 337.5,202.5 335.75,195"/><polygon points="978,728 990,716.25 1012.5,691.25 1017.5,690 1025,682.5 1038,682 1049.5,663.75 1070,671.25 1077.5,669.5 1112.5,639.5 1140,639.25 1177.6,672.6 1168.4,681.4 1172.3,684.4 1190.4,667 1199.7,672.6 1207.6,669.4 1196.7,662.6 1195.8,660.1 1175.7,647.6 1180.1,642.5 1177.6,638.4 1190.4,648.5 1203.7,655.8 1218.2,660.2 1234,662.4 1252.6,663.1 1272.4,663.1 1289,662 1293.6,663.7 1304.2,674.3 1307.5,675.6 1316,673 1324.9,674.8 1314.6,682.9 1310.9,701.7 1333.7,723.5 1330,730.2 1317.5,744 1311,745.5 1307.5,753.6 1307.2,759.7 1304.6,765.3 1243.5,778.5 1238.6,784 1240.5,798.9 1228.6,806.5 1222.2,801.2 1186.1,813.3 1179.2,822.6 1168.4,817.3 1143.75,802.5 1141.25,805 1133.75,800.75 1115,801.5 1110,799.5 1092.4,787.7 1090.6,782 1091.1,778 1094.9,772.6 1107.5,762.9 1095,755 1075,749.25 1067.5,749.5 1062.5,752 1053,752.5 1050,747.5 1038.75,750.75 1038.8,757 1035.6,764.4 1018,777 996.5,786.5 981.4,781.4 976.3,778.3 974.5,770.7 975.5,765 977.6,759.4 982.7,749.3 983.9,740.4 982,733.5"/></g></svg>
<div class="a" style="left:4px;top:844px;width:273px;height:25px;background:#fff;border:1px solid #b0aca6;border-radius:4px"></div>
<svg class="a" style="left:12px;top:849px" width="14" height="14"><circle cx="5.5" cy="5.5" r="4.2" fill="none" stroke="#7a7a7a" stroke-width="1.3"/><line x1="8.5" y1="8.5" x2="12.5" y2="12.5" stroke="#7a7a7a" stroke-width="1.5"/></svg>
<div class="a" style="left:522px;top:845px;width:104px;height:23px;background:#fff;border:1px solid #b0aca6;border-radius:3px"></div>
<svg class="a" style="left:629px;top:847px" width="18" height="18" viewBox="0 0 18 18"><path d="M3 2 C6 0 10 1 11 4 L13 9 C14 12 12 15 9 15 C6 15 4 13 3 10 Z" fill="#555" stroke="#222" stroke-width="0.8"/><path d="M5 4 L9 10 M8 3 L11 8" stroke="#ddd" stroke-width="0.8"/><circle cx="13" cy="13" r="3" fill="#eee" stroke="#333" stroke-width="0.9"/></svg>
<div class="a" style="left:691px;top:845px;width:96px;height:24px;background:#fff;border:1px solid #b0aca6;border-radius:3px"></div>
<div class="a" style="left:767px;top:846px;width:1px;height:22px;background:#c8c4be"></div>
<svg class="a" style="left:772px;top:854px" width="10" height="6"><path d="M0.5 0.5 H9.5 L5 5.5 Z" fill="#555"/></svg>
<svg class="a" style="left:800px;top:848px" width="13" height="17"><path d="M3 8 V5 A3.5 3.5 0 0 1 10 5 V8" fill="none" stroke="#666" stroke-width="1.8"/><rect x="1" y="8" width="11" height="8" rx="1.5" fill="#666"/></svg>
<div class="a" style="left:877px;top:845px;width:97px;height:23px;background:#fff;border:1px solid #b0aca6;border-radius:3px"></div>
<div class="a" style="left:960px;top:846px;width:1px;height:21px;background:#c8c4be"></div>
<svg class="a" style="left:963px;top:848px" width="10" height="18"><path d="M1 6 L5 1.5 L9 6 Z" fill="#555"/><path d="M1 11.5 L5 16 L9 11.5 Z" fill="#555"/></svg>
<div class="a" style="left:1041px;top:845px;width:93px;height:23px;background:#fff;border:1px solid #b0aca6;border-radius:3px"></div>
<div class="a" style="left:1120px;top:846px;width:1px;height:21px;background:#c8c4be"></div>
<svg class="a" style="left:1123px;top:848px" width="10" height="18"><path d="M1 6 L5 1.5 L9 6 Z" fill="#555"/><path d="M1 11.5 L5 16 L9 11.5 Z" fill="#555"/></svg>
<svg class="a" style="left:1141px;top:849px" width="14" height="14"><rect x="0.5" y="0.5" width="13" height="13" fill="#fff" stroke="#9a968f"/><path d="M3 7.5 L5.8 10.5 L11 3" fill="none" stroke="#111" stroke-width="1.8"/></svg>
<svg class="a" style="left:1217px;top:850px" width="16" height="14" viewBox="0 0 16 14"><ellipse cx="8" cy="7" rx="7.5" ry="6.5" fill="#f4f4f2" stroke="#666" stroke-width="1"/><g fill="none" stroke="#666" stroke-width="0.8"><ellipse cx="8" cy="7" rx="3.2" ry="6.5"/><line x1="0.5" y1="7" x2="15.5" y2="7"/><line x1="1.5" y1="4" x2="14.5" y2="4"/><line x1="1.5" y1="10" x2="14.5" y2="10"/><line x1="8" y1="0.5" x2="8" y2="13.5"/></g></svg>
<svg class="a" style="left:1314px;top:849px" width="18" height="16"><path d="M9 1 C14 1 17 3.5 17 7 C17 10 14.5 12 11 12.5 L14 15.5 L7.5 12.8 C3.5 12.3 1 10 1 7 C1 3.5 4 1 9 1 Z" fill="#6a6a6a"/></svg>
<svg class="a" style="left:1349px;top:860px" width="12" height="12"><rect x="9" y="2" width="1" height="1" fill="#b4b0a9"/><rect x="6" y="5" width="1" height="1" fill="#b4b0a9"/><rect x="9" y="5" width="1" height="1" fill="#b4b0a9"/><rect x="3" y="8" width="1" height="1" fill="#b4b0a9"/><rect x="6" y="8" width="1" height="1" fill="#b4b0a9"/><rect x="9" y="8" width="1" height="1" fill="#b4b0a9"/></svg>
<div class="a t" style="left:573.8px;top:6.73px;font-size:14px;color:#dfdbd2;font-weight:bold;transform:scaleX(1.0859)">*Untitled Project - QGIS [new]</div>
<div class="a t" style="left:10.6px;top:32.68px;font-size:14.5px;color:#000000;font-weight:normal;transform:scaleX(1.0545)">Project</div>
<div class="a t" style="left:72.0px;top:32.68px;font-size:14.5px;color:#000000;font-weight:normal;transform:scaleX(1.1200)">Edit</div>
<div class="a t" style="left:114.3px;top:32.68px;font-size:14.5px;color:#000000;font-weight:normal;transform:scaleX(1.0619)">View</div>
<div class="a t" style="left:162.0px;top:32.68px;font-size:14.5px;color:#000000;font-weight:normal;transform:scaleX(1.0033)">Layer</div>
<div class="a t" style="left:213.0px;top:32.68px;font-size:14.5px;color:#000000;font-weight:normal;transform:scaleX(1.0686)">Settings</div>
<div class="a t" style="left:284.4px;top:32.68px;font-size:14.5px;color:#000000;font-weight:normal;transform:scaleX(1.0302)">Plugins</div>
<div class="a t" style="left:347.8px;top:32.68px;font-size:14.5px;color:#000000;font-weight:normal;transform:scaleX(1.0873)">Vector</div>
<div class="a t" style="left:407.0px;top:32.68px;font-size:14.5px;color:#000000;font-weight:normal;transform:scaleX(1.0136)">Raster</div>
<div class="a t" style="left:464.9px;top:32.68px;font-size:14.5px;color:#000000;font-weight:normal;transform:scaleX(1.0165)">Database</div>
<div class="a t" style="left:543.0px;top:32.68px;font-size:14.5px;color:#000000;font-weight:normal;transform:scaleX(1.0216)">Web</div>
<div class="a t" style="left:588.6px;top:32.68px;font-size:14.5px;color:#000000;font-weight:normal;transform:scaleX(1.0121)">Processing</div>
<div class="a t" style="left:676.6px;top:32.68px;font-size:14.5px;color:#000000;font-weight:normal;transform:scaleX(1.0292)">Help</div>
<div class="a t" style="left:4.4px;top:130.83px;font-size:15px;color:#000000;font-weight:normal;transform:scaleX(1.0106)">Browser</div>
<div class="a t" style="left:46.3px;top:182.43px;font-size:15px;color:#000000;font-weight:normal;transform:scaleX(0.9824)">Favorites</div>
<div class="a t" style="left:46.3px;top:201.43px;font-size:15px;color:#000000;font-weight:normal;transform:scaleX(0.9921)">Home</div>
<div class="a t" style="left:46.3px;top:220.43px;font-size:15px;color:#000000;font-weight:normal;transform:scaleX(1.3184)">/</div>
<div class="a t" style="left:46.3px;top:239.43px;font-size:15px;color:#000000;font-weight:normal;transform:scaleX(0.9523)">GeoPackage</div>
<div class="a t" style="left:46.3px;top:258.43px;font-size:15px;color:#000000;font-weight:normal;transform:scaleX(1.0072)">SpatiaLite</div>
<div class="a t" style="left:46.3px;top:277.43px;font-size:15px;color:#000000;font-weight:normal;transform:scaleX(0.9273)">PostGIS</div>
<div class="a t" style="left:46.3px;top:296.43px;font-size:15px;color:#000000;font-weight:normal;transform:scaleX(0.9083)">MSSQL</div>
<div class="a t" style="left:46.3px;top:315.43px;font-size:15px;color:#000000;font-weight:normal;transform:scaleX(0.9422)">DB2</div>
<div class="a t" style="left:46.3px;top:334.43px;font-size:15px;color:#000000;font-weight:normal;transform:scaleX(0.9659)">WMS/WMTS</div>
<div class="a t" style="left:46.3px;top:353.43px;font-size:15px;color:#000000;font-weight:normal;transform:scaleX(0.9581)">XYZ Tiles</div>
<div class="a t" style="left:46.3px;top:372.43px;font-size:15px;color:#000000;font-weight:normal;transform:scaleX(0.8714)">WCS</div>
<div class="a t" style="left:46.3px;top:391.43px;font-size:15px;color:#000000;font-weight:normal;transform:scaleX(0.8671)">WFS</div>
<div class="a t" style="left:46.3px;top:410.43px;font-size:15px;color:#000000;font-weight:normal;transform:scaleX(0.9151)">OWS</div>
<div class="a t" style="left:46.3px;top:429.43px;font-size:15px;color:#000000;font-weight:normal;transform:scaleX(0.9801)">ArcGisMapServer</div>
<div class="a t" style="left:46.3px;top:448.43px;font-size:15px;color:#000000;font-weight:normal;transform:scaleX(0.9867)">ArcGisFeatureServer</div>
<div class="a t" style="left:46.3px;top:467.43px;font-size:15px;color:#000000;font-weight:normal;transform:scaleX(0.9857)">GeoNode</div>
<div class="a t" style="left:4.1px;top:524.72px;font-size:15px;color:#000000;font-weight:normal;transform:scaleX(0.9616)">Layers</div>
<div class="a t" style="left:66.4px;top:575.62px;font-size:15px;color:#ffffff;font-weight:normal;transform:scaleX(1.0756)">protected_areas</div>
<div class="a t" style="left:33.4px;top:848.42px;font-size:15px;color:#7b7b7b;font-weight:normal;transform:scaleX(1.0076)">Type to locate (Ctrl+K)</div>
<div class="a t" style="left:285.6px;top:848.83px;font-size:14px;color:#000000;font-weight:normal;transform:scaleX(0.8056)">Ready</div>
<div class="a t" style="left:458.5px;top:848.68px;font-size:14.5px;color:#000000;font-weight:normal;transform:scaleX(0.8388)">Coordinate</div>
<div class="a t" style="left:526.8px;top:848.68px;font-size:14.5px;color:#000000;font-weight:normal;transform:scaleX(0.8198)">20.3631,-33.8948</div>
<div class="a t" style="left:659.6px;top:848.68px;font-size:14.5px;color:#000000;font-weight:normal;transform:scaleX(0.7497)">Scale</div>
<div class="a t" style="left:695.3px;top:848.68px;font-size:14.5px;color:#000000;font-weight:normal;transform:scaleX(0.8145)">1:76050</div>
<div class="a t" style="left:821.2px;top:848.68px;font-size:14.5px;color:#000000;font-weight:normal;transform:scaleX(0.8736)">Magnifier</div>
<div class="a t" style="left:882.6px;top:848.68px;font-size:14.5px;color:#000000;font-weight:normal;transform:scaleX(0.7980)">100%</div>
<div class="a t" style="left:984.4px;top:848.68px;font-size:14.5px;color:#000000;font-weight:normal;transform:scaleX(0.8683)">Rotation</div>
<div class="a t" style="left:1046.0px;top:848.68px;font-size:14.5px;color:#000000;font-weight:normal;transform:scaleX(0.7671)">0,0 °</div>
<div class="a t" style="left:1160.4px;top:848.68px;font-size:14.5px;color:#000000;font-weight:normal;transform:scaleX(0.8158)">Render</div>
<div class="a t" style="left:1237.2px;top:848.68px;font-size:14.5px;color:#000000;font-weight:normal;transform:scaleX(0.7587)">EPSG:4326</div>
</body></html>
